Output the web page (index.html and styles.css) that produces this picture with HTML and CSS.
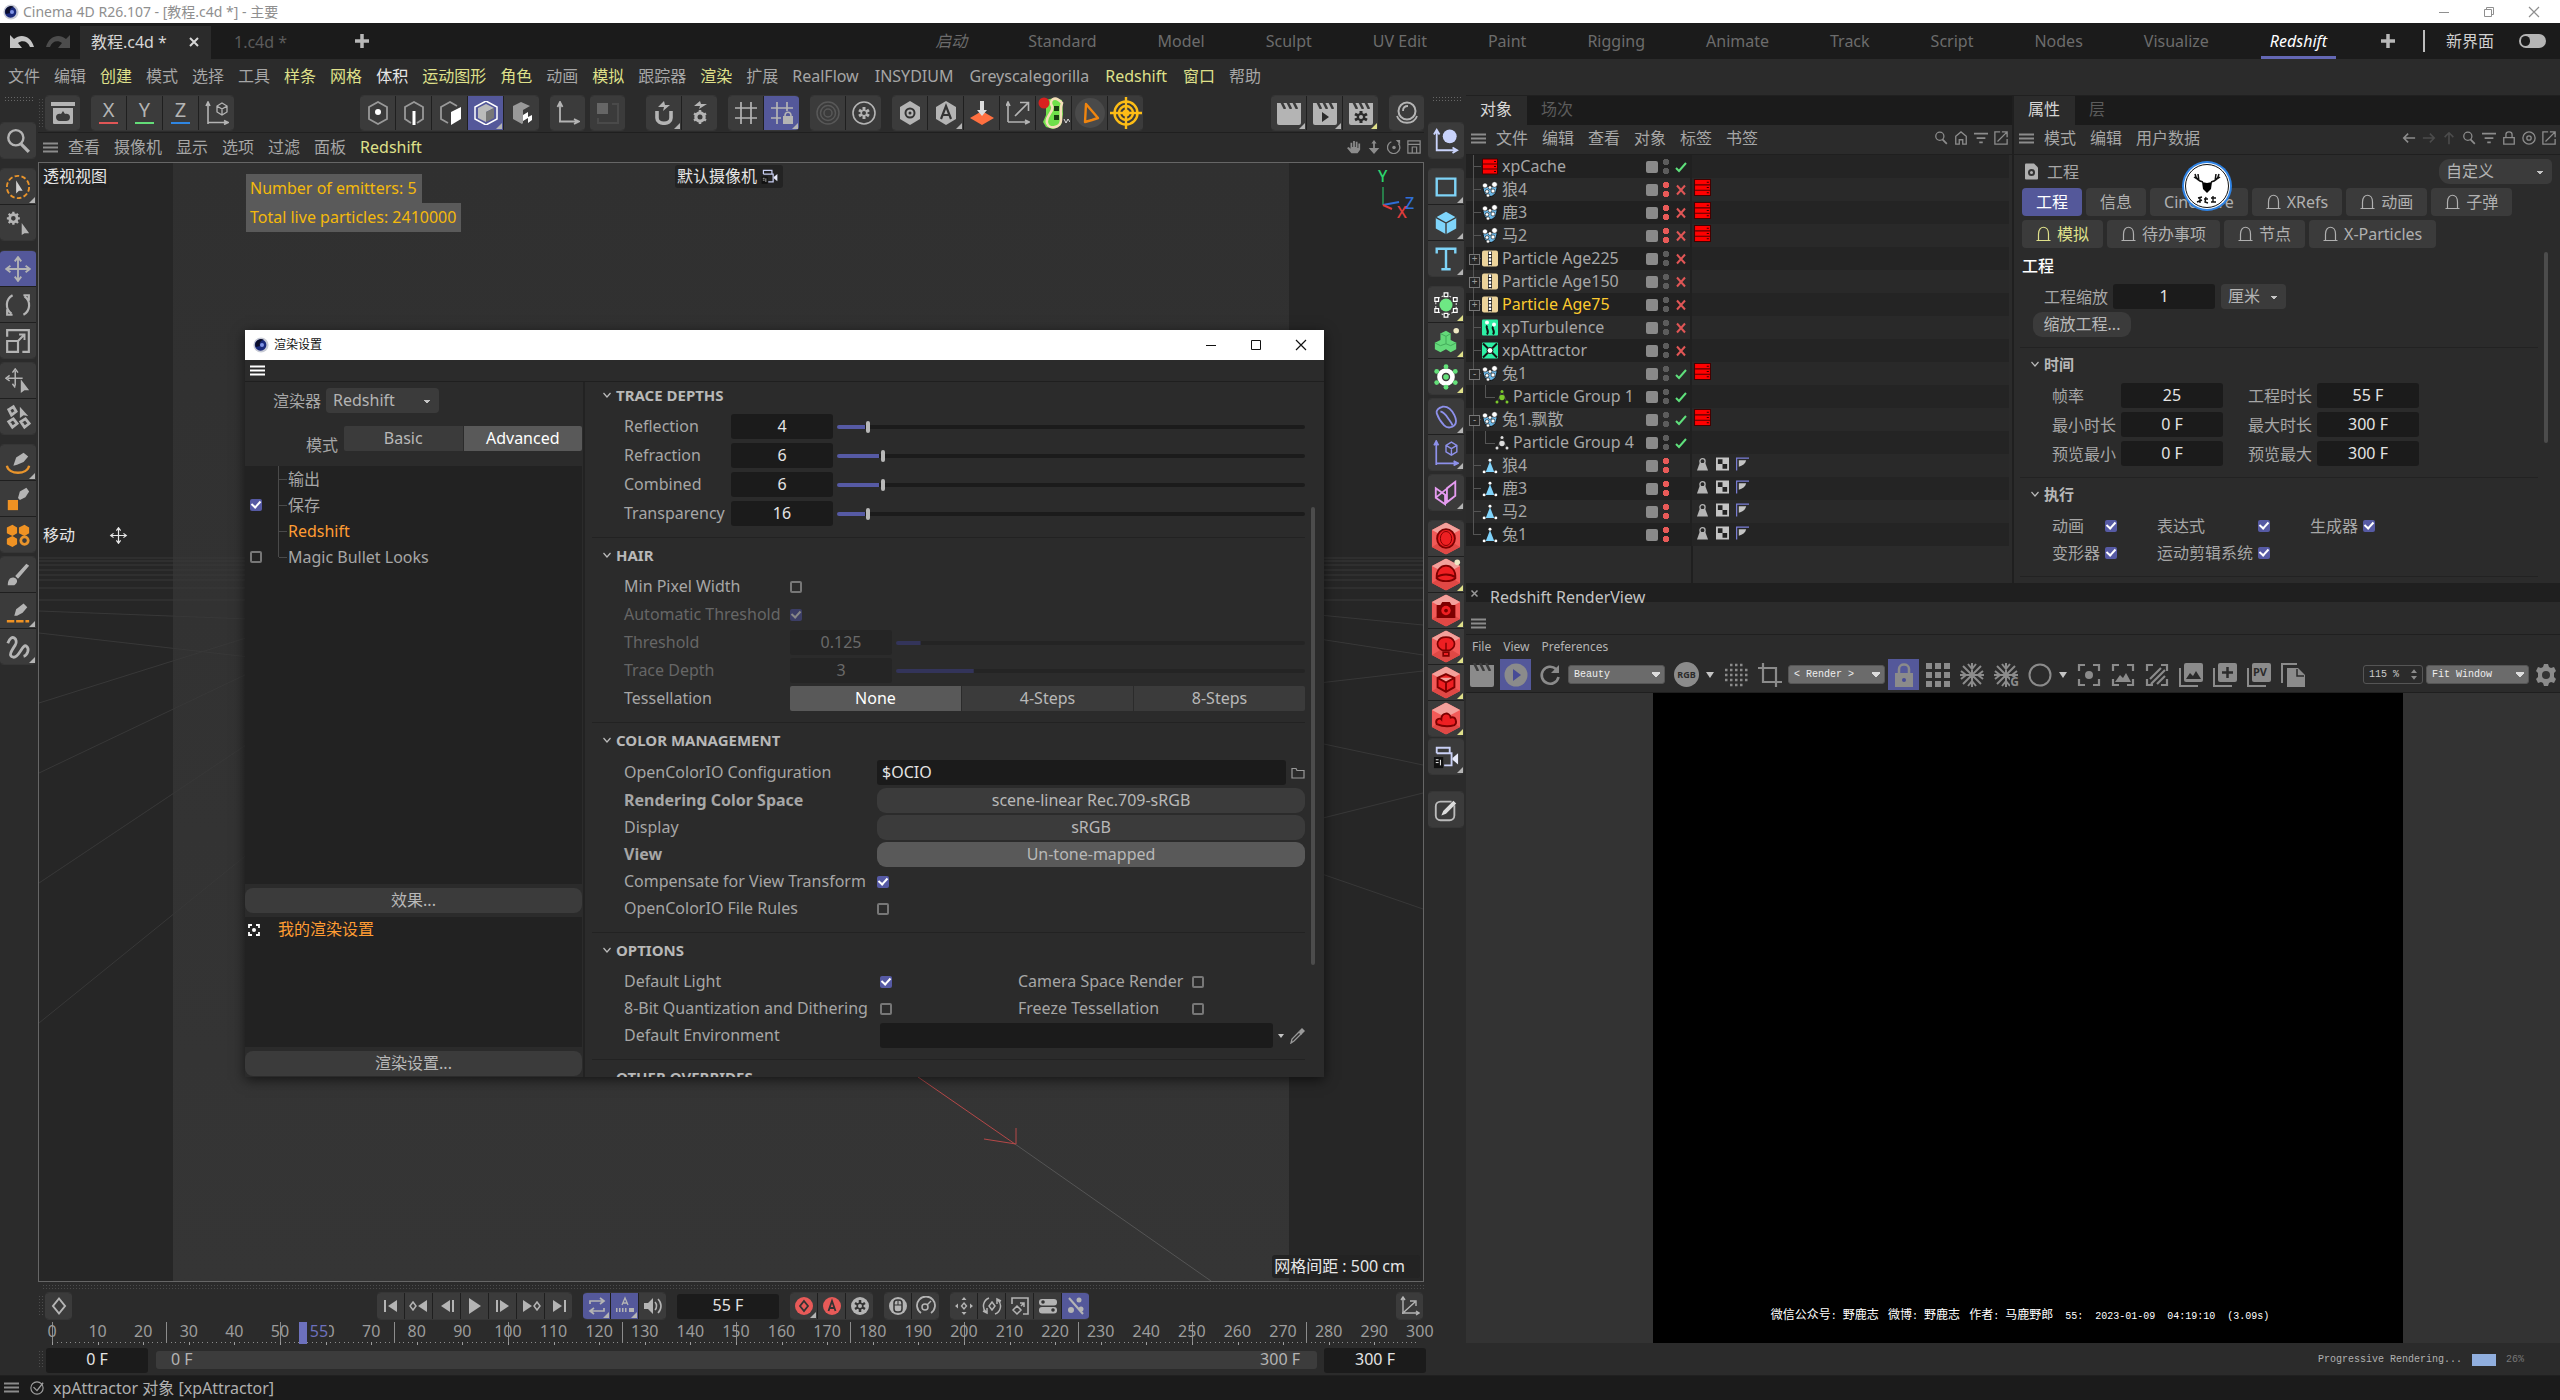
FILE: index.html
```html
<!DOCTYPE html>
<html lang="zh-CN">
<head>
<meta charset="utf-8">
<title>Cinema 4D R26.107 - [教程.c4d *] - 主要</title>
<link rel="stylesheet" href="styles.css">
</head>
<body>
<svg class="sprite" aria-hidden="true">
  <symbol id="logo" viewBox="0 0 16 16"><circle cx="8" cy="8" r="7.6" fill="#c9ccd6"/><circle cx="7.6" cy="8" r="5.8" fill="#1a2a7c"/><path d="M3 10a5.500 5.500 0 0 1 8-7c-3 0-5 3-4 6z" fill="#0a0d2a"/><circle cx="9" cy="8" r="2" fill="#7f94e6"/></symbol>
  <symbol id="menu" viewBox="0 0 15 11"><path d="M0 1.500h15M0 5.500h15M0 9.500h15" stroke="currentColor" stroke-width="2"/></symbol>
  <symbol id="undo" viewBox="0 0 26 14"><path d="M1 14V1l4 4c7-6 17-3 20 8h-4c-2-6-8-7-12-4l4 5z" fill="currentColor"/></symbol>
  <symbol id="redo" viewBox="0 0 26 14"><path d="M25 14V1l-4 4C14-1 4 2 1 13h4c2-6 8-7 12-4l-4 5z" fill="currentColor"/></symbol>
  <symbol id="x" viewBox="0 0 12 12"><path d="M2 2l8 8M10 2l-8 8" stroke="currentColor" stroke-width="2"/></symbol>
  <symbol id="plus" viewBox="0 0 14 14"><path d="M7 0v14M0 7h14" stroke="currentColor" stroke-width="3.500"/></symbol>
  <symbol id="min" viewBox="0 0 12 12"><path d="M1 6.500h10" stroke="currentColor"/></symbol>
  <symbol id="max" viewBox="0 0 12 12"><path d="M1.500 1.500h9v9h-9z" fill="none" stroke="currentColor"/></symbol>
  <symbol id="restore" viewBox="0 0 12 12"><path d="M1.500 3.500h7v7h-7zM3.500 3V1.500h7v7H9" fill="none" stroke="currentColor"/></symbol>
  <symbol id="close" viewBox="0 0 12 12"><path d="M1 1l10 10M11 1L1 11" stroke="currentColor" stroke-width="1.200"/></symbol>
  <symbol id="search" viewBox="0 0 24 24"><circle cx="10" cy="9" r="7" fill="none" stroke="currentColor" stroke-width="2.200"/><path d="M14.500 14.500L22 22" stroke="currentColor" stroke-width="3"/></symbol>
  <symbol id="archive" viewBox="0 0 24 24"><path d="M0 1h24v4H0zM2 7h20v15a1 1 0 0 1-1 1H3a1 1 0 0 1-1-1z" fill="currentColor"/><path d="M12 10l2 3c3-1 5 1 5 3 0 3-2 4-4 4H9c-3 0-4-2-4-4s2-4 5-3z" fill="#3b3b3b"/></symbol>
  <symbol id="coords" viewBox="0 0 24 24"><path d="M3 23V2M1 5l2-4 2 4M3 21.500h19M19 19.500l4 2-4 2" fill="none" stroke="currentColor" stroke-width="1.600"/><path d="M17 2l5 3v6l-5 3-5-3V5zM12 5l5 3 5-3M17 8v6" fill="none" stroke="currentColor" stroke-width="1.300"/></symbol>
  <symbol id="hexpt" viewBox="0 0 24 24"><path d="M12 1l9 5v12l-9 5-9-5V6z" fill="none" stroke="#999" stroke-width="1.800"/><circle cx="12" cy="11" r="3" fill="#fff"/></symbol>
  <symbol id="hexedge" viewBox="0 0 24 24"><path d="M9 22l-6-4V6l9-5 9 5v12l-6 4" fill="none" stroke="#999" stroke-width="1.800"/><path d="M12 10v14" stroke="#fff" stroke-width="3"/></symbol>
  <symbol id="hexpoly" viewBox="0 0 24 24"><path d="M10 22l-7-4V6l9-5 7 4" fill="none" stroke="#999" stroke-width="1.800"/><path d="M13 11l10-5v12l-10 6z" fill="#fff"/></symbol>
  <symbol id="hexobj" viewBox="0 0 24 24"><path d="M12 0l11 6v12l-11 6L1 18V6z" fill="none" stroke="#fff" stroke-width="1.500"/><path d="M12 3l8 4-8 4v10l-8-4V7z" fill="#bbb"/><path d="M12 11l8-4v10l-8 4z" fill="#777"/></symbol>
  <symbol id="hexuv" viewBox="0 0 24 24"><path d="M11 1l9 4-7 4v13l-1 1-9-5V5z" fill="#999"/><path d="M13 14l5-3v5l4-2v5l-4 3v-5l-5 3z" fill="#fff"/></symbol>
  <symbol id="axis" viewBox="0 0 24 24"><path d="M4 21V2M1.500 6L4 1l2.500 5M3 20.500h19M18 18l5 2.500-5 2.500" fill="none" stroke="currentColor" stroke-width="1.800"/></symbol>
  <symbol id="axis2" viewBox="0 0 24 24"><path d="M1 2h11v11H1z" fill="#666"/><path d="M16 3h6v19H2v-5" fill="none" stroke="#4a4a4a" stroke-width="2"/></symbol>
  <symbol id="magnet" viewBox="0 0 24 24"><path d="M5 10v7c0 7 14 7 14 0v-7" fill="none" stroke="currentColor" stroke-width="3.600"/><path d="M12 0l1 4h5l-7 6 1-4H6z" fill="currentColor"/></symbol>
  <symbol id="gear" viewBox="0 0 24 24"><path d="M10 1h4l1 3 2 1 3-1 2 4-2 2v4l2 2-2 4-3-1-2 1-1 3h-4l-1-3-2-1-3 1-2-4 2-2v-4L2 8l2-4 3 1 2-1z" fill="currentColor"/><circle cx="12" cy="12" r="4" fill="#333"/></symbol>
  <symbol id="snapgear" viewBox="0 0 24 24"><path d="M12 0l1 3h6l-8 5 1-3H6z" fill="currentColor"/><circle cx="12" cy="16" r="4" fill="none" stroke="currentColor" stroke-width="3.500"/><path d="M12 9v14M6 12.500l12 7M6 19.500l12-7" stroke="currentColor" stroke-width="2.500"/><circle cx="12" cy="16" r="2.500" fill="#3b3b3b"/></symbol>
  <symbol id="grid" viewBox="0 0 24 24"><path d="M7 1v22M17 1v22M1 7h22M1 17h22" stroke="currentColor" stroke-width="1.700"/></symbol>
  <symbol id="gridlock" viewBox="0 0 24 24"><path d="M7 1v22M17 1v9M1 7h22M1 17h10" stroke="currentColor" stroke-width="1.700"/><path d="M13 15h10v8H13z" fill="currentColor"/><path d="M15 15c0-5 6-5 6 0" fill="none" stroke="currentColor" stroke-width="1.600"/></symbol>
  <symbol id="rings" viewBox="0 0 24 24"><g fill="none" stroke="#585858" stroke-width="1.500"><circle cx="12" cy="12" r="11"/><circle cx="12" cy="12" r="7.500"/><circle cx="12" cy="12" r="4"/></g></symbol>
  <symbol id="ringgear" viewBox="0 0 24 24"><circle cx="12" cy="12" r="11" fill="none" stroke="currentColor" stroke-width="1.600"/><path d="M12 6v12M7 9l10 6M7 15l10-6" stroke="currentColor" stroke-width="3"/><circle cx="12" cy="12" r="2" fill="#3b3b3b"/></symbol>
  <symbol id="hexring" viewBox="0 0 24 24"><path d="M12 0l10 6v12l-10 6L2 18V6z" fill="currentColor"/><circle cx="12" cy="12" r="4.500" fill="none" stroke="#333" stroke-width="2"/><circle cx="12" cy="12" r="1.500" fill="#333"/></symbol>
  <symbol id="hexa" viewBox="0 0 24 24"><path d="M12 0l10 6v12l-10 6L2 18V6z" fill="currentColor"/><path d="M7 18l5-13 5 13M9 14h6" fill="none" stroke="#333" stroke-width="2.200"/></symbol>
  <symbol id="drop" viewBox="0 0 24 24"><path d="M0 17l12-7 12 7-12 7z" fill="#ff7040"/><path d="M10 0h4v9h3l-5 6-5-6h3z" fill="#ddd"/></symbol>
  <symbol id="axisarrow" viewBox="0 0 24 24"><path d="M2 21V2M0 5l2-4 2 4M2 21h20M19 19l4 2-4 2M9 15L22 2M14 1.500h8.500V10" fill="none" stroke="currentColor" stroke-width="1.600"/></symbol>
  <symbol id="snake" viewBox="0 0 32 32"><path d="M8 3l8-2 8 2 1 14-2 11-8 4-7-2-3-5 3-7z" fill="#6fe04a"/><path d="M24 6C16-3 11 4 14 9s-7 10-5 17 14 5 14-3-1-12 1-17z" fill="none" stroke="#f4dfb8" stroke-width="2.600"/><path d="M16 9h5v5h-5zM16 18h5v5h-5z" fill="#173d10"/><circle cx="6" cy="6" r="5.500" fill="#d8201f"/><path d="M26 22l2 4 2-4 2 3" fill="none" stroke="#ddd"/></symbol>
  <symbol id="play3" viewBox="0 0 32 32"><circle cx="16" cy="16" r="15" fill="#4a4a4a"/><path d="M12 7l12 14-6 2-7 2z" fill="none" stroke="#f0850f" stroke-width="2.400" stroke-linejoin="round"/></symbol>
  <symbol id="target" viewBox="0 0 32 32"><g fill="none" stroke="#fdbd16" stroke-width="2.400"><circle cx="16" cy="16" r="11.500"/><circle cx="16" cy="16" r="7"/><path d="M16 0v32M0 16h32"/></g><circle cx="16" cy="16" r="3.500" fill="#fdbd16"/></symbol>
  <symbol id="clap" viewBox="0 0 24 24"><path d="M0 2h24v7H0z" fill="currentColor"/><path d="M4 0l4 8M10 0l4 8M16 0l4 8" stroke="#3b3b3b" stroke-width="2.600"/><path d="M0 8h24v14a2 2 0 0 1-2 2H2a2 2 0 0 1-2-2z" fill="currentColor"/></symbol>
  <symbol id="clapplay" viewBox="0 0 24 24"><use href="#clap"/><path d="M9 11l7 5-7 5z" fill="#2b2b2b"/></symbol>
  <symbol id="clapgear" viewBox="0 0 24 24"><use href="#clap"/><path d="M12 10v12M6 13l12 6M6 19l12-6" stroke="#2b2b2b" stroke-width="3"/><circle cx="12" cy="16" r="4" fill="#2b2b2b"/><circle cx="12" cy="16" r="2" fill="#b4b4b4"/></symbol>
  <symbol id="ball" viewBox="0 0 24 24"><circle cx="12" cy="10" r="8.500" fill="none" stroke="currentColor" stroke-width="2"/><path d="M8 10c0-3 2-5 5-5M2 15c3 9 17 9 20 0" fill="none" stroke="currentColor" stroke-width="1.800"/></symbol>
  <symbol id="hand" viewBox="0 0 16 16"><path d="M5 15L0 9l2-1 2 2V3h2v5h1V1h2v7h1V2h2v7h1V4h2v7l-3 4z" fill="currentColor"/></symbol>
  <symbol id="updown" viewBox="0 0 16 16"><path d="M8 0l3 4H9v5h5l-6 7-6-7h5V4H5z" fill="currentColor"/></symbol>
  <symbol id="orbit" viewBox="0 0 16 16"><path d="M5 2a7 7 0 1 0 8 2" fill="none" stroke="currentColor" stroke-width="1.500"/><path d="M10 0h5v5z" fill="currentColor"/><circle cx="8" cy="8.500" r="2" fill="currentColor"/></symbol>
  <symbol id="panes" viewBox="0 0 16 16"><path d="M1 1h14v14H1zM1 5h14M6 15V8h5v7" fill="none" stroke="currentColor" stroke-width="1.400"/></symbol>
  <symbol id="home" viewBox="0 0 16 16"><path d="M2 6l6-5 6 5v9h-4v-5H6v5H2z" fill="none" stroke="currentColor" stroke-width="1.500"/></symbol>
  <symbol id="filter" viewBox="0 0 16 16"><path d="M0 3h16M3 8h10M6 13h4" stroke="currentColor" stroke-width="2"/></symbol>
  <symbol id="ext" viewBox="0 0 16 16"><path d="M7 1H1v14h14V9M4 12L15 1M9 1h6v6" fill="none" stroke="currentColor" stroke-width="1.500"/></symbol>
  <symbol id="left" viewBox="0 0 16 16"><path d="M15 8H2M7 3L2 8l5 5" fill="none" stroke="currentColor" stroke-width="1.800"/></symbol>
  <symbol id="right" viewBox="0 0 16 16"><path d="M1 8h13M9 3l5 5-5 5" fill="none" stroke="currentColor" stroke-width="1.800"/></symbol>
  <symbol id="up" viewBox="0 0 16 16"><path d="M8 15V2M3 7l5-5 5 5" fill="none" stroke="currentColor" stroke-width="1.800"/></symbol>
  <symbol id="lock" viewBox="0 0 16 16"><path d="M2 7.500h12V15H2zM4.500 7V4c0-4 7-4 7 0v3" fill="none" stroke="currentColor" stroke-width="1.500"/></symbol>
  <symbol id="aim" viewBox="0 0 16 16"><circle cx="8" cy="8" r="7" fill="none" stroke="currentColor" stroke-width="1.500"/><circle cx="8" cy="8" r="2.500" fill="none" stroke="currentColor" stroke-width="1.500"/></symbol>
  <symbol id="docgear" viewBox="0 0 13 16"><path d="M1 0h8l4 4v11a1 1 0 0 1-1 1H1a1 1 0 0 1-1-1V1a1 1 0 0 1 1-1z" fill="#b0b0b0"/><circle cx="6.500" cy="9" r="2.500" fill="none" stroke="#333" stroke-width="2"/></symbol>
  <symbol id="bell" viewBox="0 0 15 16"><path d="M.5 14.500h14M2.500 14V8c0-9 10-9 10 0v6" fill="none" stroke="currentColor" stroke-width="1.200"/></symbol>
  <symbol id="chev" viewBox="0 0 8 8"><path d="M.5 2L4 6l3.500-4" fill="none" stroke="#bbb" stroke-width="1.200"/></symbol>
  <symbol id="check" viewBox="0 0 12 12"><path d="M1 7l3 3 7-8" fill="none" stroke="#5fe07c" stroke-width="2"/></symbol>
  <symbol id="cross" viewBox="0 0 12 12"><path d="M2 1.500l8 9M10 1.500l-8 9" stroke="#e05656" stroke-width="2"/></symbol>
  <symbol id="cache" viewBox="0 0 16 16"><path d="M.5.500h15v15H.5z" fill="#f00" stroke="#400"/><path d="M1 5.500h14M1 10.500h14" stroke="#500"/><path d="M12 3h2M12 8h2M12 13h2" stroke="#300"/></symbol>
  <symbol id="emit" viewBox="0 0 16 16"><path d="M1 5c0 6 3 10 7 10s7-4 7-10z" fill="#6cb8e8" stroke="#111"/><g fill="#fff" stroke="#111" stroke-width=".6"><circle cx="3" cy="4" r="2.500"/><circle cx="12.500" cy="3" r="2.800"/><circle cx="8" cy="6" r="1.800"/><circle cx="5" cy="10" r="1.800"/><circle cx="11" cy="9.500" r="2"/><circle cx="6" cy="14" r="1.700"/></g></symbol>
  <symbol id="age" viewBox="0 0 16 16"><rect width="16" height="16" rx="2" fill="#ecd39a"/><path d="M6 1h4v14H6z" fill="#222"/><path d="M8 1v14" stroke="#fff" stroke-width="2.400" stroke-dasharray="2.400 1"/></symbol>
  <symbol id="turb" viewBox="0 0 16 16"><rect width="16" height="16" rx="1" fill="#2df0a5"/><path d="M5 15c3-4-2-6 0-9M11 15c3-4-2-5 0-8" fill="none" stroke="#111" stroke-width="2"/><circle cx="5" cy="3" r="2" fill="#fff"/><circle cx="12" cy="5" r="2" fill="#fff"/></symbol>
  <symbol id="attr" viewBox="0 0 16 16"><rect width="16" height="16" rx="1" fill="#2df0a5"/><path d="M1 1l14 14M15 1L1 15" stroke="#111" stroke-width="2"/><circle cx="8" cy="8" r="3" fill="#fff" stroke="#111"/></symbol>
  <symbol id="group" viewBox="0 0 14 16"><path d="M7 2L2 14M7 2l5 12" stroke="#555" stroke-width=".6"/><g fill="currentColor"><circle cx="7" cy="3" r="1.500"/><circle cx="7" cy="9" r="2.700"/><circle cx="2" cy="13.500" r="1.500"/><circle cx="12" cy="13.500" r="1.500"/></g></symbol>
  <symbol id="poly" viewBox="0 0 14 16"><path d="M7 4l4 10H3z" fill="#7fd3fb"/><g fill="#fff"><circle cx="7" cy="3" r="1.400"/><circle cx="1.500" cy="14" r="1.400"/><circle cx="12.500" cy="14" r="1.400"/></g></symbol>
  <symbol id="weight" viewBox="0 0 14 14"><path d="M4 6h6l3 8H1z" fill="#b4b4b4"/><circle cx="7" cy="4" r="2.800" fill="none" stroke="#b4b4b4" stroke-width="1.400"/></symbol>
  <symbol id="uvw" viewBox="0 0 14 14"><path d="M0 0h14v14H0z" fill="#c4c4c4"/><path d="M2 2h5v5H2zM7 7h5v5H7z" fill="#222"/></symbol>
  <symbol id="phong" viewBox="0 0 14 14"><path d="M.7 14V.7H14" fill="none" stroke="#7b7fd8" stroke-width="1.300"/><path d="M3 3h8c-1 4-4 6-8 7z" fill="#c4c4c4"/></symbol>
  <symbol id="live" viewBox="0 0 28 28"><circle cx="14" cy="14" r="12" fill="none" stroke="#e8942c" stroke-width="2" stroke-dasharray="5 2.500"/><path d="M12 7l7 11h-4l-3 3z" fill="#d0d0d0"/></symbol>
  <symbol id="gearcur" viewBox="0 0 28 28"><circle cx="9" cy="9" r="4" fill="none" stroke="currentColor" stroke-width="3"/><path d="M9 2v3M9 13v3M2 9h3M13 9h3M4 4l2 2M12 12l2 2M4 14l2-2M12 6l2-2" stroke="currentColor" stroke-width="2.500"/><path d="M18 14l8 11h-5l-3 2z" fill="currentColor"/></symbol>
  <symbol id="move" viewBox="0 0 24 24"><path d="M12 2v20M2 12h20M9 5l3-4 3 4M9 19l3 4 3-4M5 9l-4 3 4 3M19 9l4 3-4 3" fill="none" stroke="currentColor" stroke-width="1.700"/></symbol>
  <symbol id="rotate" viewBox="0 0 24 24"><path d="M7 3a10 10 0 0 0-1 17M17 21a10 10 0 0 0 1-17M7 21H2v-5M17 3h5v5" fill="none" stroke="currentColor" stroke-width="2"/></symbol>
  <symbol id="scale" viewBox="0 0 24 24"><path d="M2 8V2h20v20h-6" fill="none" stroke="currentColor" stroke-width="2"/><path d="M2 12h10v10H2z" fill="none" stroke="currentColor" stroke-width="2"/><path d="M12 12l6-6M13 6h5v5" fill="none" stroke="currentColor" stroke-width="1.800"/></symbol>
  <symbol id="movecur" viewBox="0 0 28 28"><path d="M11 3v16M3 11h16M8 5l3-4 3 4M8 17l3 4M5 8l-4 3 4 3" fill="none" stroke="currentColor" stroke-width="1.600"/><path d="M17 12l9 12h-5l-4 3z" fill="currentColor"/></symbol>
  <symbol id="pieces" viewBox="0 0 28 28"><g fill="none" stroke="currentColor" stroke-width="3"><path d="M4 6l5-3 3 5-5 4zM4 19l5-3 4 5-5 4zM17 19l5-3 4 5-5 4z"/></g><path d="M16 3l9 10-5-1-4 3z" fill="currentColor"/></symbol>
  <symbol id="pen" viewBox="0 0 28 28"><path d="M2 17c2 10 22 10 24 0" fill="none" stroke="#e8942c" stroke-width="2.500"/><path d="M9 17l3-9 8-5 5 4-5 6-7 3z" fill="#b4b4b4"/></symbol>
  <symbol id="pen2" viewBox="0 0 28 28"><path d="M3 15h11v11H3z" fill="#ef9223"/><path d="M14 13l2-7 7-4 3 4-4 6-6 3z" fill="#b4b4b4"/></symbol>
  <symbol id="pen3" viewBox="0 0 28 28"><path d="M2 25h24" stroke="#ef9223" stroke-width="2.500" stroke-dasharray="8 2"/><path d="M10 19l2-7 8-6 4 4-5 6-6 3z" fill="#b4b4b4"/></symbol>
  <symbol id="blocks" viewBox="0 0 28 28"><g fill="#ef9223"><path d="M2 6l6-3 5 3v6l-5 3-6-3zM15 6l6-3 5 3v6l-5 3-6-3zM2 18l6-3 5 3v6l-5 3-6-3z"/></g><circle cx="21" cy="20" r="4" fill="none" stroke="#e8942c" stroke-width="3"/></symbol>
  <symbol id="brush" viewBox="0 0 28 28"><path d="M3 25c0-6 3-9 7-8s4 6 0 8zM11 15L23 2l3 2-12 14z" fill="currentColor"/></symbol>
  <symbol id="squig" viewBox="0 0 28 28"><path d="M3 10c4-12 12-4 8 2s-8 12-2 13 10-15 14-12 1 10-3 11" fill="none" stroke="currentColor" stroke-width="3"/></symbol>
  <symbol id="nullo" viewBox="0 0 28 28"><path d="M4 25V4M1 7l3-5 3 5M3 24h21M21 21l5 3-5 3" fill="none" stroke="#c9d3fb" stroke-width="2"/><circle cx="18" cy="9" r="7.500" fill="#c9d3fb"/></symbol>
  <symbol id="rect" viewBox="0 0 28 28"><path d="M4 5h20v18H4z" fill="none" stroke="#7ed3f7" stroke-width="2.600"/></symbol>
  <symbol id="cube" viewBox="0 0 28 28"><path d="M14 2l11 6v12l-11 6-11-6V8z" fill="#7fd5fb"/><path d="M3 8l11 6 11-6M14 14v12" fill="none" stroke="#3b3b3b" stroke-width="1.500"/></symbol>
  <symbol id="text" viewBox="0 0 28 28"><path d="M4 8V3h20v5M14 3v22M9 25h10" fill="none" stroke="#7ed3f7" stroke-width="2.600"/></symbol>
  <symbol id="subdiv" viewBox="0 0 28 28"><circle cx="14" cy="14" r="7" fill="#6ee884"/><path d="M14 3l11 5v12l-11 6-11-6V8z" fill="none" stroke="#ddd" stroke-width="1.200" stroke-dasharray="2 2"/><g fill="#333" stroke="#fff" stroke-width="1.300"><path d="M12 1h4v4h-4zM2 6h4v4H2zM22 6h4v4h-4zM2 18h4v4H2zM22 18h4v4h-4zM12 23h4v4h-4z"/></g></symbol>
  <symbol id="cloner" viewBox="0 0 28 28"><path d="M8 6l6-3 5 3v7l6 3v7l-6 3-5-3-6 3-6-3v-7l6-3z" fill="#64d97a"/><path d="M8 6l6 3 5-3M14 9v8M2 16l6 3 6-2 5 2 6-3" fill="none" stroke="#40a857"/><circle cx="25" cy="3" r="3" fill="#efe9c4"/></symbol>
  <symbol id="field" viewBox="0 0 28 28"><circle cx="14" cy="14" r="7" fill="none" stroke="#fff" stroke-width="5"/><g fill="#64e07a"><circle cx="14" cy="14" r="3"/><circle cx="14" cy="3" r="2.600"/><circle cx="14" cy="25" r="2.600"/><circle cx="4" cy="8" r="2.600"/><circle cx="24" cy="8" r="2.600"/><circle cx="4" cy="20" r="2.600"/><circle cx="24" cy="20" r="2.600"/></g></symbol>
  <symbol id="bean" viewBox="0 0 28 28"><path d="M10 3c6-1 10 3 13 9s2 9 0 11-7 4-11 0S5 13 4 10s2-6 6-7zM8 8c4 1 6 4 8 7s4 5 5 8" fill="none" stroke="#8d90ea" stroke-width="2"/></symbol>
  <symbol id="pcoords" viewBox="0 0 24 24"><g color="#8d90ea"><use href="#coords"/></g></symbol>
  <symbol id="sym" viewBox="0 0 28 28"><path d="M3 9l10 7v10L3 19zM15 9l9-7v15l-9 7zM3 19l21-17" fill="none" stroke="#e59bf0" stroke-width="2"/></symbol>
  <symbol id="rshex" viewBox="0 0 32 34"><path d="M16 0l15 8v18l-15 8L1 26V8z" fill="#f25a58"/><path d="M16 0l15 8-15 8L1 8z" fill="#f3a09b"/><path d="M1 26l15-9 15 9-15 8z" fill="#e04845"/></symbol>
  <symbol id="rs1" viewBox="0 0 32 34"><use href="#rshex"/><ellipse cx="16" cy="17" rx="9.500" ry="10" fill="#ee1f22" stroke="#7d0000" stroke-width="2"/><ellipse cx="16" cy="17" rx="6" ry="7.500" fill="none" stroke="#7d0000" stroke-width="1"/></symbol>
  <symbol id="rs2" viewBox="0 0 32 34"><use href="#rshex"/><path d="M6 21c-1-18 21-18 20 0-4 4-16 4-20 0zM6 20c5-4 15-4 20 0" fill="#ee1f22" stroke="#7d0000" stroke-width="2"/><circle cx="28" cy="4" r="3" fill="#efe9c4"/></symbol>
  <symbol id="rs3" viewBox="0 0 32 34"><use href="#rshex"/><path d="M6 11h4l2-3h8l2 3h4v14H6z" fill="#7d0000"/><circle cx="16" cy="17" r="5" fill="#ee1f22"/><circle cx="16" cy="17" r="2" fill="#7d0000"/></symbol>
  <symbol id="rs4" viewBox="0 0 32 34"><use href="#rshex"/><path d="M12 21c-9-5-5-14 4-14s13 9 4 14zM13 23h6v4h-6z" fill="#ee1f22" stroke="#7d0000" stroke-width="1.800"/><path d="M16 21v-8" stroke="#7d0000" stroke-width="1.500"/></symbol>
  <symbol id="rs5" viewBox="0 0 32 34"><use href="#rshex"/><path d="M16 8l9 4v10l-9 5-9-5V12zM7 12l9 5 9-5M16 17v10" fill="#ee1f22" stroke="#7d0000" stroke-width="2"/></symbol>
  <symbol id="rs6" viewBox="0 0 32 34"><use href="#rshex"/><path d="M6 23c-2-5 3-7 5-5 0-8 9-8 10-2 6-2 7 6 4 8-6 2-14 1-19-1z" fill="#ee1f22" stroke="#7d0000" stroke-width="2"/></symbol>
  <symbol id="stcam" viewBox="0 0 28 28"><path d="M4 10V4h14v6M4 10h16v13h-8" fill="none" stroke="#c9d0f5" stroke-width="2"/><path d="M21 15l6-5v12l-6-5z" fill="#e6e9fa"/><path d="M1 14h10v12H1z" fill="#111"/><path d="M3 17h3M3 20h3M8 17v6" stroke="#fff"/></symbol>
  <symbol id="edit" viewBox="0 0 28 28"><path d="M20 5H8a5 5 0 0 0-5 5v10a5 5 0 0 0 5 5h10a5 5 0 0 0 5-5V9" fill="none" stroke="#bbb" stroke-width="2"/><path d="M9 20l2-5L22 4l3 3-11 11z" fill="#ddd"/></symbol>
  <symbol id="kdiam" viewBox="0 0 20 20"><path d="M10 2.500l6 7.500-6 7.500L4 10z" fill="none" stroke="currentColor" stroke-width="2"/></symbol>
  <symbol id="t1" viewBox="0 0 20 20"><path d="M4 4v12" stroke="currentColor" stroke-width="2"/><path d="M16 4v12l-9-6z" fill="currentColor"/></symbol>
  <symbol id="t2" viewBox="0 0 20 20"><path d="M4 6l3 4-3 4-3-4z" fill="none" stroke="currentColor" stroke-width="1.500"/><path d="M18 4v12l-9-6z" fill="currentColor"/></symbol>
  <symbol id="t3" viewBox="0 0 20 20"><path d="M16 4v12" stroke="currentColor" stroke-width="2"/><path d="M13 4v12l-9-6z" fill="currentColor"/></symbol>
  <symbol id="t4" viewBox="0 0 20 20"><path d="M4 2v16l12-8z" fill="currentColor"/></symbol>
  <symbol id="t5" viewBox="0 0 20 20"><path d="M4 4v12" stroke="currentColor" stroke-width="2"/><path d="M7 4v12l9-6z" fill="currentColor"/></symbol>
  <symbol id="t6" viewBox="0 0 20 20"><path d="M16 6l3 4-3 4-3-4z" fill="none" stroke="currentColor" stroke-width="1.500"/><path d="M2 4v12l9-6z" fill="currentColor"/></symbol>
  <symbol id="t7" viewBox="0 0 20 20"><path d="M16 4v12" stroke="currentColor" stroke-width="2"/><path d="M4 4v12l9-6z" fill="currentColor"/></symbol>
  <symbol id="loop" viewBox="0 0 20 20"><path d="M3 8V5h13M13 2l4 3-4 3M17 12v3H4M7 12l-4 3 4 3" fill="none" stroke="currentColor" stroke-width="1.700"/></symbol>
  <symbol id="abar" viewBox="0 0 20 20"><path d="M7 9l3-7 3 7M8 7h4" fill="none" stroke="currentColor" stroke-width="1.300"/><path d="M1 14h11" stroke="currentColor" stroke-width="4" stroke-dasharray="1.500 1.500"/><path d="M14 12h5v4h-5z" fill="currentColor"/></symbol>
  <symbol id="sound" viewBox="0 0 20 20"><path d="M1 7h4l5-5v16l-5-5H1z" fill="currentColor"/><path d="M12 6c2 2 2 6 0 8M15 3c4 4 4 10 0 14" fill="none" stroke="currentColor" stroke-width="1.600"/></symbol>
  <symbol id="rec" viewBox="0 0 20 20"><circle cx="10" cy="10" r="9" fill="#e85a58"/><path d="M10 5l4 5-4 5-4-5z" fill="none" stroke="#333" stroke-width="1.800"/></symbol>
  <symbol id="auto" viewBox="0 0 20 20"><circle cx="10" cy="10" r="9" fill="#e85a58"/><path d="M6.500 15L10 5l3.500 10M8 12h4" fill="none" stroke="#333" stroke-width="1.800"/></symbol>
  <symbol id="kgear" viewBox="0 0 20 20"><circle cx="10" cy="10" r="9" fill="#b4b4b4"/><path d="M10 4v12M5 7l10 6M5 13l10-6" stroke="#333" stroke-width="2.500"/><circle cx="10" cy="10" r="3.500" fill="#333"/><circle cx="10" cy="10" r="2" fill="#b4b4b4"/></symbol>
  <symbol id="mouse" viewBox="0 0 20 20"><circle cx="10" cy="10" r="9" fill="#b4b4b4"/><rect x="6" y="4" width="8" height="12" rx="3" fill="none" stroke="#333" stroke-width="1.500"/><path d="M10 4v5M6 9h8" stroke="#333"/></symbol>
  <symbol id="dial" viewBox="0 0 20 20"><path d="M5 17a9 9 0 1 1 10 0" fill="none" stroke="currentColor" stroke-width="1.800"/><circle cx="9" cy="11" r="3" fill="none" stroke="currentColor" stroke-width="1.500"/><path d="M11 9l4-4" stroke="currentColor" stroke-width="1.500"/></symbol>
  <symbol id="kmove" viewBox="0 0 20 20"><path d="M10 7l2.500 3-2.500 3-2.500-3z" fill="none" stroke="currentColor" stroke-width="1.400"/><path d="M10 1l2.500 3h-5zM10 19l2.500-3h-5zM1 10l3-2.500v5zM19 10l-3-2.500v5z" fill="currentColor"/></symbol>
  <symbol id="krot" viewBox="0 0 20 20"><path d="M10 6l3 4-3 4-3-4z" fill="none" stroke="currentColor" stroke-width="1.500"/><path d="M7 2a8.500 8.500 0 0 0-3 14M13 18a8.500 8.500 0 0 0 3-14M1 15l4 2v-5M19 5l-4-2v5" fill="none" stroke="currentColor" stroke-width="1.500"/></symbol>
  <symbol id="kscale" viewBox="0 0 20 20"><path d="M2 8V2h16v16h-5" fill="none" stroke="currentColor" stroke-width="1.600"/><path d="M7 10l4 4-4 4-4-4zM11 10l3-3M10 7h4v4" fill="none" stroke="currentColor" stroke-width="1.500"/></symbol>
  <symbol id="kparam" viewBox="0 0 20 20"><rect x="1" y="3" width="18" height="6.500" rx="3" fill="#b4b4b4"/><rect x="1" y="11" width="18" height="6.500" rx="3" fill="#b4b4b4"/><circle cx="5" cy="6" r="1.800" fill="#333"/><circle cx="15" cy="14" r="1.800" fill="#333"/></symbol>
  <symbol id="kpla" viewBox="0 0 20 20"><path d="M3 2l14 16" stroke="currentColor" stroke-width="2"/><g fill="currentColor"><circle cx="13" cy="4" r="2.500"/><circle cx="5" cy="14" r="3"/><circle cx="15" cy="13" r="2.500"/></g></symbol>
  <symbol id="fcurve" viewBox="0 0 20 20"><path d="M3 18V2M1 4l2-3 2 3M2 17h16M16 15l3 2-3 2M4 16L15 6M10 5h6v5" fill="none" stroke="currentColor" stroke-width="1.400"/></symbol>
  <symbol id="okc" viewBox="0 0 16 16"><circle cx="8" cy="8" r="7" fill="none" stroke="currentColor" stroke-width="1.300"/><path d="M4 7l4 4 7-9" fill="none" stroke="currentColor" stroke-width="1.500"/></symbol>
  <symbol id="playc" viewBox="0 0 24 24"><circle cx="12" cy="12" r="11.500" fill="#8b8b8b"/><path d="M9 6l8 6-8 6z" fill="#474b96"/></symbol>
  <symbol id="refresh" viewBox="0 0 24 24"><path d="M18 6a8.500 8.500 0 1 0 2.500 8" fill="none" stroke="currentColor" stroke-width="2.600"/><path d="M21 2v8h-8z" fill="currentColor"/></symbol>
  <symbol id="dots" viewBox="0 0 24 24"><path d="M6 2h14M1 7h23M1 12h23M1 17h23M6 22h14" stroke="currentColor" stroke-width="2.400" stroke-dasharray="2.500 2.500"/></symbol>
  <symbol id="crop" viewBox="0 0 24 24"><path d="M5 0v19h19M0 5h18v19" fill="none" stroke="currentColor" stroke-width="2.200"/></symbol>
  <symbol id="lock2" viewBox="0 0 24 24"><path d="M3 10h18v14H3z" fill="currentColor"/><path d="M7 11V6c0-6 10-6 10 0v5" fill="none" stroke="currentColor" stroke-width="2.500"/><circle cx="12" cy="17" r="2" fill="#474b96"/></symbol>
  <symbol id="nine" viewBox="0 0 24 24"><path d="M0 0h6v6H0zM9 0h6v6H9zM18 0h6v6h-6zM0 9h6v6H0zM9 9h6v6H9zM18 9h6v6h-6zM0 18h6v6H0zM9 18h6v6H9zM18 18h6v6h-6z" fill="currentColor"/></symbol>
  <symbol id="snow" viewBox="0 0 24 24"><path d="M12 0v24M0 12h24M3 3l18 18M21 3L3 21M8 1l4 5 4-5M8 23l4-5 4 5M1 8l5 4-5 4M23 8l-5 4 5 4" fill="none" stroke="currentColor" stroke-width="2"/></symbol>
  <symbol id="ring" viewBox="0 0 24 24"><circle cx="12" cy="12" r="10.500" fill="none" stroke="currentColor" stroke-width="2"/></symbol>
  <symbol id="corners" viewBox="0 0 24 24"><path d="M2 8V2h6M16 2h6v6M2 16v6h6M22 16v6h-6" fill="none" stroke="currentColor" stroke-width="2.200"/></symbol>
  <symbol id="cdot" viewBox="0 0 24 24"><use href="#corners"/><circle cx="12" cy="12" r="4" fill="currentColor"/></symbol>
  <symbol id="cimg" viewBox="0 0 24 24"><use href="#corners"/><path d="M4 19l5-7 3 3 3-5 5 9z" fill="currentColor"/></symbol>
  <symbol id="chat" viewBox="0 0 24 24"><use href="#corners"/><path d="M5 16L16 5M6 21L20 7M12 21l8-8" stroke="currentColor" stroke-width="2.200"/></symbol>
  <symbol id="stack" viewBox="0 0 24 24"><path d="M1 5v18h18" fill="none" stroke="currentColor" stroke-width="2"/><rect x="5" width="19" height="19" rx="2" fill="currentColor"/></symbol>
  <symbol id="simg" viewBox="0 0 24 24"><use href="#stack"/><path d="M7 16l4-6 3 3 3-5 5 8z" fill="#2b2b2b"/></symbol>
  <symbol id="splus" viewBox="0 0 24 24"><use href="#stack"/><path d="M14.500 4v11M9 9.500h11" stroke="#2b2b2b" stroke-width="2.500"/></symbol>
  <symbol id="spage" viewBox="0 0 24 24"><path d="M1 20V1h15" fill="none" stroke="currentColor" stroke-width="2"/><path d="M6 5h11l7 7v12H6z" fill="currentColor"/><path d="M16 6v7h7" fill="none" stroke="#2b2b2b" stroke-width="1.500"/></symbol>
  <symbol id="spin" viewBox="0 0 8 14"><path d="M0 5l4-5 4 5zM0 9l4 5 4-5z" fill="#8b8b8b"/></symbol>
  <symbol id="folder" viewBox="0 0 14 12"><path d="M1 11V1.500h4l1 2h7V11z" fill="none" stroke="currentColor" stroke-width="1.200"/></symbol>
  <symbol id="dropper" viewBox="0 0 16 16"><path d="M2 15l1-4 7-7 2 2-7 7z" fill="none" stroke="currentColor" stroke-width="1.300"/><path d="M10 3l3-3 3 3-4 4z" fill="currentColor"/></symbol>
  <symbol id="scene" viewBox="0 0 12 12"><path d="M1 4V1h3M8 1h3v3M1 8v3h3M11 8v3H8" fill="none" stroke="currentColor" stroke-width="1.800"/><circle cx="6" cy="6" r="2" fill="currentColor"/></symbol>
</svg>

<header class="titlebar">
  <svg class="i16"><use href="#logo"/></svg><span>Cinema 4D R26.107 - [教程.c4d *] - 主要</span>
  <div class="winbtns"><button aria-label="最小化"><svg class="i12"><use href="#min"/></svg></button><button aria-label="还原"><svg class="i12"><use href="#restore"/></svg></button><button aria-label="关闭"><svg class="i12"><use href="#close"/></svg></button></div>
</header>

<div class="docbar">
  <button class="undo" aria-label="撤销"><svg><use href="#undo"/></svg></button>
  <button class="undo off" aria-label="重做"><svg><use href="#redo"/></svg></button>
  <div class="doctab on"><span>教程.c4d *</span><button aria-label="关闭标签"><svg class="i12"><use href="#x"/></svg></button></div>
  <div class="doctab"><span>1.c4d *</span></div>
  <button class="adddoc" aria-label="新建"><svg class="i14"><use href="#plus"/></svg></button>
  <nav class="layouts">
    <a href="#"><i>启动</i></a><a href="#">Standard</a><a href="#">Model</a><a href="#">Sculpt</a><a href="#">UV Edit</a><a href="#">Paint</a><a href="#">Rigging</a><a href="#">Animate</a><a href="#">Track</a><a href="#">Script</a><a href="#">Nodes</a><a href="#">Visualize</a><a href="#" class="on"><i>Redshift</i></a>
  </nav>
  <button class="addlayout" aria-label="添加布局"><svg class="i14"><use href="#plus"/></svg></button>
  <label class="newui">新界面<input type="checkbox" class="toggle"></label>
</div>

<nav class="mainmenu">
  <a href="#">文件</a><a href="#">编辑</a><a href="#" class="y">创建</a><a href="#">模式</a><a href="#">选择</a><a href="#">工具</a><a href="#" class="y">样条</a><a href="#" class="y">网格</a><a href="#" class="w">体积</a><a href="#" class="y">运动图形</a><a href="#" class="y">角色</a><a href="#">动画</a><a href="#" class="y">模拟</a><a href="#">跟踪器</a><a href="#" class="y">渲染</a><a href="#">扩展</a><a href="#" class="lat">RealFlow</a><a href="#" class="lat">INSYDIUM</a><a href="#" class="lat">Greyscalegorilla</a><a href="#" class="lat y">Redshift</a><a href="#" class="y">窗口</a><a href="#">帮助</a>
</nav>

<main class="work">
  <aside class="tools">
    <div class="grip"></div>
    <div class="bg v s1"><button aria-label="搜索"><svg><use href="#search"/></svg></button></div>
    <div class="bg v s2"><button class="more" aria-label="实时选择"><svg><use href="#live"/></svg></button><button aria-label="选择设置"><svg><use href="#gearcur"/></svg></button></div>
    <div class="bg v s2"><button class="on" aria-label="移动"><svg><use href="#move"/></svg></button><button aria-label="旋转"><svg><use href="#rotate"/></svg></button><button aria-label="缩放"><svg><use href="#scale"/></svg></button></div>
    <div class="bg v s3"><button aria-label="放置"><svg><use href="#movecur"/></svg></button><button aria-label="散布"><svg><use href="#pieces"/></svg></button></div>
    <div class="bg v s2"><button class="more" aria-label="样条画笔"><svg><use href="#pen"/></svg></button><button aria-label="多边形画笔"><svg><use href="#pen2"/></svg></button><button aria-label="体素"><svg><use href="#blocks"/></svg></button></div>
    <div class="bg v s3"><button aria-label="笔刷"><svg><use href="#brush"/></svg></button><button class="more" aria-label="线条"><svg><use href="#pen3"/></svg></button><button class="more" aria-label="涂抹"><svg><use href="#squig"/></svg></button></div>
  </aside>

  <section class="center">
    <div class="toolbar">
      <div class="vgrip"></div>
      <div class="bg"><button aria-label="资产"><svg><use href="#archive"/></svg></button></div>
      <div class="bg g11"><button class="ax axx">X</button><button class="ax axy">Y</button><button class="ax axz">Z</button><button aria-label="坐标"><svg><use href="#coords"/></svg></button></div>
      <div class="bg gbig"><button aria-label="点"><svg><use href="#hexpt"/></svg></button><button aria-label="边"><svg><use href="#hexedge"/></svg></button><button aria-label="多边形"><svg><use href="#hexpoly"/></svg></button><button class="on more" aria-label="模型"><svg><use href="#hexobj"/></svg></button><button aria-label="纹理"><svg><use href="#hexuv"/></svg></button></div>
      <div class="bg g11"><button aria-label="轴"><svg><use href="#axis"/></svg></button></div>
      <div class="bg g5"><button aria-label="视窗独显"><svg><use href="#axis2"/></svg></button></div>
      <div class="bg g21"><button class="more" aria-label="捕捉"><svg><use href="#magnet"/></svg></button><button aria-label="捕捉设置"><svg><use href="#snapgear"/></svg></button></div>
      <div class="bg g11"><button aria-label="工作平面"><svg><use href="#grid"/></svg></button><button class="on more" aria-label="锁定工作平面"><svg><use href="#gridlock"/></svg></button></div>
      <div class="bg g11"><button aria-label="软选择"><svg><use href="#rings"/></svg></button><button aria-label="软选择设置"><svg><use href="#ringgear"/></svg></button></div>
      <div class="bg g11"><button aria-label="独显"><svg><use href="#hexring"/></svg></button><button class="more" aria-label="自动"><svg><use href="#hexa"/></svg></button><button aria-label="落地"><svg><use href="#drop"/></svg></button><button aria-label="对齐"><svg><use href="#axisarrow"/></svg></button><button class="wide" aria-label="脚本"><svg><use href="#snake"/></svg></button><button class="wide" aria-label="插件"><svg><use href="#play3"/></svg></button><button class="wide" aria-label="目标"><svg><use href="#target"/></svg></button></div>
      <div class="bg end"><button class="more" aria-label="渲染视图"><svg><use href="#clap"/></svg></button><button class="more" aria-label="渲染到图片"><svg><use href="#clapplay"/></svg></button><button class="more ym" aria-label="渲染设置"><svg><use href="#clapgear"/></svg></button></div>
      <div class="bg g11"><button aria-label="材质"><svg><use href="#ball"/></svg></button></div>
    </div>
    <div class="vpmenu">
      <svg class="ham"><use href="#menu"/></svg>
      <a href="#">查看</a><a href="#">摄像机</a><a href="#">显示</a><a href="#">选项</a><a href="#">过滤</a><a href="#">面板</a><a href="#" class="y">Redshift</a>
      <span class="mini"><svg class="i14"><use href="#hand"/></svg><svg class="i14"><use href="#updown"/></svg><svg class="i14"><use href="#orbit"/></svg><svg class="i14"><use href="#panes"/></svg></span>
    </div>
    <div class="viewport">
      <svg class="space" viewBox="0 0 1384 1118" preserveAspectRatio="none">
        <defs><linearGradient id="bgm" x2="0" y2="1"><stop offset="0" stop-color="#303030"/><stop offset="1" stop-color="#353535"/></linearGradient></defs>
        <rect width="1384" height="1118" fill="#262626"/><rect x="134" width="1116" height="1118" fill="url(#bgm)"/>
        <g stroke="#383838" fill="none">
          <path d="M0 395h1384M0 398h1384M0 402h1384M0 407h1384M0 412h1384M0 417h1384M0 425h1384M0 437h1384"/>
          <path d="M0 448l210 8M0 470l210 24M0 540l210-66M0 610l210-100M0 720l210-140M0 860l210-170M1280 452l104 10M1280 476l104 16M1280 520l104-12M1280 580l104 22M1280 656l104-26M1280 710l104 36"/>
        </g>
        <path d="M976 981l196 137" stroke="#555"/><path d="M879 914l97 67M945 976l32 5V965" stroke="#b54848" fill="none"/>
      </svg>
      <div class="hud tl">透视视图</div>
      <div class="stats"><span>Number of emitters: 5</span><span>Total live particles: 2410000</span></div>
      <div class="hud cam">默认摄像机<svg><use href="#stcam"/></svg></div>
      <div class="hud tool">移动<svg class="i16"><use href="#move"/></svg></div>
      <div class="hud br">网格间距 : 500 cm</div>
      <div class="gizmo"><b>Y</b><b>Z</b><b>X</b><svg viewBox="0 0 50 60"><path d="M15 24v18" stroke="#2bd46c"/><path d="M15 42l16-3" stroke="#2f6fd8" stroke-width="2"/><path d="M15 42l9 4" stroke="#e23c3c" stroke-width="2"/></svg></div>
    </div>
    <div class="hgrip"></div>
    <div class="transport">
      <div class="vgrip"></div>
      <div class="bg sm"><button aria-label="关键帧"><svg><use href="#kdiam"/></svg></button></div>
      <div class="bg sm tmid"><button aria-label="起点"><svg><use href="#t1"/></svg></button><button aria-label="上一关键帧"><svg><use href="#t2"/></svg></button><button aria-label="上一帧"><svg><use href="#t3"/></svg></button><button aria-label="播放"><svg><use href="#t4"/></svg></button><button aria-label="下一帧"><svg><use href="#t5"/></svg></button><button aria-label="下一关键帧"><svg><use href="#t6"/></svg></button><button aria-label="终点"><svg><use href="#t7"/></svg></button></div>
      <div class="bg sm g11"><button class="on more" aria-label="循环"><svg><use href="#loop"/></svg></button><button class="on more" aria-label="自动范围"><svg><use href="#abar"/></svg></button><button aria-label="声音"><svg><use href="#sound"/></svg></button></div>
      <input class="num g11" value="55 F" aria-label="当前帧">
      <div class="bg sm g11"><button class="more" aria-label="记录"><svg><use href="#rec"/></svg></button><button aria-label="自动关键帧"><svg><use href="#auto"/></svg></button><button aria-label="关键帧设置"><svg><use href="#kgear"/></svg></button></div>
      <div class="bg sm g11"><button aria-label="鼠标"><svg><use href="#mouse"/></svg></button><button aria-label="速率"><svg><use href="#dial"/></svg></button></div>
      <div class="bg sm g11"><button aria-label="位置"><svg><use href="#kmove"/></svg></button><button aria-label="旋转"><svg><use href="#krot"/></svg></button><button aria-label="缩放"><svg><use href="#kscale"/></svg></button><button aria-label="参数"><svg><use href="#kparam"/></svg></button><button class="on" aria-label="点级别"><svg><use href="#kpla"/></svg></button></div>
      <div class="bg sm end"><button aria-label="函数曲线"><svg><use href="#fcurve"/></svg></button></div>
    </div>
    <div class="ruler">
      <ol><li>0</li><li>10</li><li>20</li><li>30</li><li>40</li><li>50</li><li>60</li><li>70</li><li>80</li><li>90</li><li>100</li><li>110</li><li>120</li><li>130</li><li>140</li><li>150</li><li>160</li><li>170</li><li>180</li><li>190</li><li>200</li><li>210</li><li>220</li><li>230</li><li>240</li><li>250</li><li>260</li><li>270</li><li>280</li><li>290</li><li>300</li></ol>
      <div class="playhead" style="left:18.333%"><span>55</span></div>
    </div>
    <div class="range">
      <div class="vgrip"></div>
      <input class="num" value="0 F" aria-label="最小帧">
      <div class="rangebar"><span>0 F</span><span>300 F</span></div>
      <input class="num" value="300 F" aria-label="最大帧">
    </div>
  </section>

  <aside class="tools palette">
    <div class="grip"></div>
    <div class="bg v s1"><button aria-label="空白"><svg><use href="#nullo"/></svg></button></div>
    <div class="bg v s2"><button class="more" aria-label="样条"><svg><use href="#rect"/></svg></button><button class="more" aria-label="立方体"><svg><use href="#cube"/></svg></button><button class="more" aria-label="文本"><svg><use href="#text"/></svg></button></div>
    <div class="bg v s2"><button class="more ym" aria-label="细分"><svg><use href="#subdiv"/></svg></button><button class="more ym" aria-label="克隆"><svg><use href="#cloner"/></svg></button><button class="more ym" aria-label="效果器"><svg><use href="#field"/></svg></button></div>
    <div class="bg v s3"><button class="more" aria-label="弯曲"><svg><use href="#bean"/></svg></button><button class="more" aria-label="域"><svg><use href="#pcoords"/></svg></button></div>
    <div class="bg v s3"><button class="more" aria-label="对称"><svg><use href="#sym"/></svg></button></div>
    <div class="bg v s2 rs"><button aria-label="RS 材质"><svg><use href="#rs1"/></svg></button><button class="more ym" aria-label="RS 穹顶"><svg><use href="#rs2"/></svg></button><button class="more ym" aria-label="RS 相机"><svg><use href="#rs3"/></svg></button><button class="more ym" aria-label="RS 灯光"><svg><use href="#rs4"/></svg></button><button class="more ym" aria-label="RS 代理"><svg><use href="#rs5"/></svg></button><button class="more ym" aria-label="RS 天空"><svg><use href="#rs6"/></svg></button></div>
    <div class="bg v s0"><button class="more" aria-label="相机"><svg><use href="#stcam"/></svg></button></div>
    <div class="bg v s4"><button aria-label="编辑"><svg><use href="#edit"/></svg></button></div>
  </aside>

  <div class="side">
    <section class="panel objects">
      <div class="tabs"><button class="on">对象</button><button>场次</button></div>
      <div class="pmenu"><svg class="ham"><use href="#menu"/></svg><a href="#">文件</a><a href="#">编辑</a><a href="#">查看</a><a href="#">对象</a><a href="#">标签</a><a href="#">书签</a><span class="mini"><svg class="i14"><use href="#search"/></svg><svg class="i14"><use href="#home"/></svg><svg class="i14"><use href="#filter"/></svg><svg class="i14"><use href="#ext"/></svg></span></div>
      <ul class="objs">
        <li><span class="nm"><svg><use href="#cache"/></svg>xpCache</span><i class="sq"></i><i class="dd"></i><svg class="st"><use href="#check"/></svg><span class="tg"></span></li>
        <li><span class="nm"><svg><use href="#emit"/></svg>狼4</span><i class="sq"></i><i class="dd r"></i><svg class="st"><use href="#cross"/></svg><span class="tg"><svg class="c"><use href="#cache"/></svg></span></li>
        <li><span class="nm"><svg><use href="#emit"/></svg>鹿3</span><i class="sq"></i><i class="dd r"></i><svg class="st"><use href="#cross"/></svg><span class="tg"><svg class="c"><use href="#cache"/></svg></span></li>
        <li><span class="nm"><svg><use href="#emit"/></svg>马2</span><i class="sq"></i><i class="dd r"></i><svg class="st"><use href="#cross"/></svg><span class="tg"><svg class="c"><use href="#cache"/></svg></span></li>
        <li><span class="nm ex"><svg><use href="#age"/></svg>Particle Age225</span><i class="sq"></i><i class="dd"></i><svg class="st"><use href="#cross"/></svg><span class="tg"></span></li>
        <li><span class="nm ex"><svg><use href="#age"/></svg>Particle Age150</span><i class="sq"></i><i class="dd"></i><svg class="st"><use href="#cross"/></svg><span class="tg"></span></li>
        <li><span class="nm ex sel"><svg><use href="#age"/></svg>Particle Age75</span><i class="sq"></i><i class="dd"></i><svg class="st"><use href="#cross"/></svg><span class="tg"></span></li>
        <li><span class="nm"><svg><use href="#turb"/></svg>xpTurbulence</span><i class="sq"></i><i class="dd"></i><svg class="st"><use href="#cross"/></svg><span class="tg"></span></li>
        <li><span class="nm"><svg><use href="#attr"/></svg>xpAttractor</span><i class="sq"></i><i class="dd"></i><svg class="st"><use href="#cross"/></svg><span class="tg"></span></li>
        <li><span class="nm ex op"><svg><use href="#emit"/></svg>兔1</span><i class="sq"></i><i class="dd"></i><svg class="st"><use href="#check"/></svg><span class="tg"><svg class="c"><use href="#cache"/></svg></span></li>
        <li><span class="nm child green"><svg><use href="#group"/></svg>Particle Group 1</span><i class="sq"></i><i class="dd"></i><svg class="st"><use href="#check"/></svg><span class="tg"></span></li>
        <li><span class="nm ex op"><svg><use href="#emit"/></svg>兔1.飘散</span><i class="sq"></i><i class="dd"></i><svg class="st"><use href="#check"/></svg><span class="tg"><svg class="c"><use href="#cache"/></svg></span></li>
        <li><span class="nm child"><svg><use href="#group"/></svg>Particle Group 4</span><i class="sq"></i><i class="dd"></i><svg class="st"><use href="#check"/></svg><span class="tg"></span></li>
        <li><span class="nm"><svg><use href="#poly"/></svg>狼4</span><i class="sq"></i><i class="dd r"></i><i class="st"></i><span class="tg"><svg><use href="#weight"/></svg><svg><use href="#uvw"/></svg><svg><use href="#phong"/></svg></span></li>
        <li><span class="nm"><svg><use href="#poly"/></svg>鹿3</span><i class="sq"></i><i class="dd r"></i><i class="st"></i><span class="tg"><svg><use href="#weight"/></svg><svg><use href="#uvw"/></svg><svg><use href="#phong"/></svg></span></li>
        <li><span class="nm"><svg><use href="#poly"/></svg>马2</span><i class="sq"></i><i class="dd r"></i><i class="st"></i><span class="tg"><svg><use href="#weight"/></svg><svg><use href="#uvw"/></svg><svg><use href="#phong"/></svg></span></li>
        <li><span class="nm last"><svg><use href="#poly"/></svg>兔1</span><i class="sq"></i><i class="dd r"></i><i class="st"></i><span class="tg"><svg><use href="#weight"/></svg><svg><use href="#uvw"/></svg><svg><use href="#phong"/></svg></span></li>
        <li class="rest"></li>
      </ul>
    </section>

    <section class="panel attrs">
      <div class="tabs"><button class="on">属性</button><button>层</button></div>
      <div class="pmenu"><svg class="ham"><use href="#menu"/></svg><a href="#">模式</a><a href="#">编辑</a><a href="#">用户数据</a><span class="mini"><svg class="i14"><use href="#left"/></svg><svg class="i14 dim"><use href="#right"/></svg><svg class="i14 dim"><use href="#up"/></svg><svg class="i14"><use href="#search"/></svg><svg class="i14"><use href="#filter"/></svg><svg class="i14"><use href="#lock"/></svg><svg class="i14"><use href="#aim"/></svg><svg class="i14"><use href="#ext"/></svg></span></div>
      <div class="ahead"><svg><use href="#docgear"/></svg><span>工程</span><select aria-label="预设" class="dd-sel round"><option>自定义</option></select></div>
      <div class="atabs">
        <button class="on">工程</button><button>信息</button><button>Cineware</button><button><svg><use href="#bell"/></svg>XRefs</button><button><svg><use href="#bell"/></svg>动画</button><button><svg><use href="#bell"/></svg>子弹</button><button class="y"><svg><use href="#bell"/></svg>模拟</button><button><svg><use href="#bell"/></svg>待办事项</button><button><svg><use href="#bell"/></svg>节点</button><button><svg><use href="#bell"/></svg>X-Particles</button>
      </div>
      <div class="ascroll">
        <div class="abody">
          <h2>工程</h2>
          <div class="scalerow"><label for="sc">工程缩放</label><input id="sc" class="num" value="1"><select class="dd-sel unit" aria-label="单位"><option>厘米</option></select></div>
          <button class="pill scalebtn">缩放工程...</button>
          <section class="asec"><h3><svg><use href="#chev"/></svg>时间</h3>
            <div class="tgrid"><label for="a1">帧率</label><input id="a1" class="num" value="25"><label for="a2">工程时长</label><input id="a2" class="num" value="55 F"><label for="a3">最小时长</label><input id="a3" class="num" value="0 F"><label for="a4">最大时长</label><input id="a4" class="num" value="300 F"><label for="a5">预览最小</label><input id="a5" class="num" value="0 F"><label for="a6">预览最大</label><input id="a6" class="num" value="300 F"></div>
          </section>
          <section class="asec"><h3><svg><use href="#chev"/></svg>执行</h3>
            <div class="cgrid"><label for="e1">动画</label><input type="checkbox" id="e1" checked><label for="e2">表达式</label><input type="checkbox" id="e2" checked><label for="e3">生成器</label><input type="checkbox" id="e3" checked><label for="e4">变形器</label><input type="checkbox" id="e4" checked><label for="e5">运动剪辑系统</label><input type="checkbox" id="e5" checked></div>
          </section>
          <section class="asec"></section>
        </div>
        <div class="thumb"></div>
      </div>
      <div class="badge"><svg viewBox="0 0 50 50"><circle cx="25" cy="25" r="25" fill="#2f83e4"/><circle cx="25" cy="25" r="23" fill="#fff"/><circle cx="25" cy="25" r="21.500" fill="#fff" stroke="#111"/><path d="M21 21c-5-1-7-3-8-8M17 20l-1-7M29 21c5-1 7-3 8-8M33 20l1-7M15 18l-3-2M35 18l3-2" fill="none" stroke="#111" stroke-width="1.500"/><path d="M20 21l5 1 5-1-1 7-4 4-4-4z" fill="#000"/><path d="M16 37l4-1M18 36v6M15 41l5-2M22 38h4M24 36l-1 5 3 1M29 37h5M31 35v6M29 41h5" stroke="#111" stroke-width="1.400" fill="none"/></svg></div>
    </section>

    <section class="panel rv">
      <div class="rvtitle"><svg><use href="#x"/></svg><span>Redshift RenderView</span></div>
      <div class="rvham"><svg class="ham"><use href="#menu"/></svg></div>
      <nav class="rvmenu"><a href="#">File</a><a href="#">View</a><a href="#">Preferences</a></nav>
      <div class="rvbar">
        <button aria-label="渲染"><svg><use href="#clap"/></svg></button><button class="on" aria-label="开始"><svg><use href="#playc"/></svg></button><button aria-label="刷新"><svg><use href="#refresh"/></svg></button>
        <select class="rsel" aria-label="通道"><option>Beauty</option></select>
        <button class="rgb">RGB</button><i class="car"></i>
        <button aria-label="网点"><svg><use href="#dots"/></svg></button><button aria-label="裁剪"><svg><use href="#crop"/></svg></button>
        <select class="rsel" aria-label="渲染区域"><option>&lt; Render &gt;</option></select>
        <button class="on" aria-label="锁定"><svg><use href="#lock2"/></svg></button><button aria-label="网格"><svg><use href="#nine"/></svg></button><button aria-label="冻结"><svg><use href="#snow"/></svg></button><button class="sg" aria-label="冻结几何"><svg><use href="#snow"/></svg><b>G</b></button><button aria-label="圆"><svg><use href="#ring"/></svg></button><i class="car"></i>
        <button aria-label="居中"><svg><use href="#cdot"/></svg></button><button aria-label="适配"><svg><use href="#cimg"/></svg></button><button aria-label="斜线"><svg><use href="#chat"/></svg></button><button aria-label="快照"><svg><use href="#simg"/></svg></button><button aria-label="添加快照"><svg><use href="#splus"/></svg></button><button class="pv" aria-label="图片查看器"><svg><use href="#stack"/></svg><b>PV</b></button><button aria-label="复制"><svg><use href="#spage"/></svg></button>
        <div class="zoomv"><input value="115 %" aria-label="缩放"><svg><use href="#spin"/></svg></div><select class="rsel fit" aria-label="适应"><option>Fit Window</option></select><button class="last" aria-label="设置"><svg><use href="#gear"/></svg></button>
      </div>
      <div class="stage"><div class="frame"><p>微信公众号<s>: </s>野鹿志 <s> </s>微博<s>: </s>野鹿志 <s> </s>作者<s>: </s>马鹿野郎<s>  55:  2023-01-09  04:19:10  (3.09s)</s></p></div></div>
      <div class="rvfoot"><span>Progressive Rendering...</span><div class="bar"></div><span class="pc">26%</span></div>
    </section>
  </div>
</main>

<footer class="status"><svg class="ham"><use href="#menu"/></svg><svg class="i14"><use href="#okc"/></svg><span>xpAttractor 对象 [xpAttractor]</span></footer>

<div class="dialog" role="dialog" aria-label="渲染设置">
  <div class="dtitle"><svg class="i16"><use href="#logo"/></svg><span>渲染设置</span><div class="winbtns"><button aria-label="最小化"><svg class="i12"><use href="#min"/></svg></button><button aria-label="最大化"><svg class="i12"><use href="#max"/></svg></button><button aria-label="关闭"><svg class="i12"><use href="#close"/></svg></button></div></div>
  <div class="dham"><svg class="ham"><use href="#menu"/></svg></div>
  <div class="dbody">
    <div class="dleft">
      <div class="rrow"><label for="rend">渲染器</label><select id="rend" class="dd-sel"><option>Redshift</option></select></div>
      <div class="mrow"><span>模式</span><div class="seg"><button>Basic</button><button class="on">Advanced</button></div></div>
      <ul class="tree">
        <li><i></i><span>输出</span></li><li><input type="checkbox" checked aria-label="保存"><span>保存</span></li><li><i></i><span class="or">Redshift</span></li><li class="last"><input type="checkbox" aria-label="Magic Bullet Looks"><span>Magic Bullet Looks</span></li>
      </ul>
      <button class="pill">效果...</button>
      <div class="presets"><svg class="i12"><use href="#scene"/></svg><span>我的渲染设置</span></div>
      <button class="pill">渲染设置...</button>
    </div>
    <div class="dright">
      <div class="dscroll">
        <section class="dsec first"><h3><svg><use href="#chev"/></svg>TRACE DEPTHS</h3>
          <div class="g depths">
            <label for="d1">Reflection</label><input id="d1" class="num" value="4"><input type="range" aria-label="Reflection" min="0" max="64" value="4" style="--v:6%">
            <label for="d2">Refraction</label><input id="d2" class="num" value="6"><input type="range" aria-label="Refraction" min="0" max="64" value="6" style="--v:9%">
            <label for="d3">Combined</label><input id="d3" class="num" value="6"><input type="range" aria-label="Combined" min="0" max="64" value="6" style="--v:9%">
            <label for="d4">Transparency</label><input id="d4" class="num" value="16"><input type="range" aria-label="Transparency" min="0" max="256" value="16" style="--v:6%">
          </div></section>
        <section class="dsec"><h3><svg><use href="#chev"/></svg>HAIR</h3>
          <div class="g hair">
            <label for="h1">Min Pixel Width</label><input type="checkbox" id="h1"><span></span>
            <label for="h2" class="dis">Automatic Threshold</label><input type="checkbox" id="h2" checked disabled><span></span>
            <label for="h3" class="dis">Threshold</label><input id="h3" class="num" value="0.125" disabled><input type="range" aria-label="Threshold" disabled value="6" style="--v:6%">
            <label for="h4" class="dis">Trace Depth</label><input id="h4" class="num" value="3" disabled><input type="range" aria-label="Trace Depth" disabled value="19" style="--v:19%">
            <span>Tessellation</span><div class="seg three"><button class="on">None</button><button>4-Steps</button><button>8-Steps</button></div>
          </div></section>
        <section class="dsec"><h3><svg><use href="#chev"/></svg>COLOR MANAGEMENT</h3>
          <div class="g color">
            <label for="c1">OpenColorIO Configuration</label><div class="path"><input id="c1" class="num" value="$OCIO"><svg><use href="#folder"/></svg></div>
            <b>Rendering Color Space</b><button class="pill">scene-linear Rec.709-sRGB</button>
            <span>Display</span><button class="pill">sRGB</button>
            <b>View</b><button class="pill hot">Un-tone-mapped</button>
            <label for="c5">Compensate for View Transform</label><input type="checkbox" id="c5" checked>
            <label for="c6">OpenColorIO File Rules</label><input type="checkbox" id="c6">
          </div></section>
        <section class="dsec"><h3><svg><use href="#chev"/></svg>OPTIONS</h3>
          <div class="g opts">
            <label for="o1">Default Light</label><input type="checkbox" id="o1" checked><label for="o2">Camera Space Render</label><input type="checkbox" id="o2">
            <label for="o3">8-Bit Quantization and Dithering</label><input type="checkbox" id="o3"><label for="o4">Freeze Tessellation</label><input type="checkbox" id="o4">
            <label for="o5">Default Environment</label><div class="path env"><input id="o5" class="num" value=""><i class="car"></i><svg><use href="#dropper"/></svg></div>
          </div></section>
        <section class="dsec"><h3><i></i>OTHER OVERRIDES</h3></section>
      </div>
      <div class="thumb"></div>
    </div>
  </div>
</div>
</body>
</html>
```
FILE: styles.css
```css
* { box-sizing: border-box; }
html, body { height: 100%; }
body {
  margin: 0; display: flex; flex-direction: column; position: relative; overflow: hidden;
  font: 16px/22px "Noto Sans", "Noto Sans CJK SC", sans-serif;
  color: #a6a6a6; background: #2b2b2b;
}
button, input, select { font: inherit; color: inherit; border: 0; padding: 0; margin: 0; background: none; }
a { color: inherit; text-decoration: none; }
h2, h3, ul, ol, p { margin: 0; padding: 0; font: inherit; list-style: none; }
svg { display: block; flex: none; }
.sprite { position: absolute; width: 0; height: 0; }
.i12 { width: 12px; height: 12px; }
.i14 { width: 14px; height: 14px; }
.i16 { width: 16px; height: 16px; }
.ham { width: 15px; height: 11px; color: #8c8c8c; }
.y { color: #dfe08a; }
.w { color: #e6e6e6; }

/* window chrome */
.titlebar { height: 23px; flex: none; background: #fff; color: #8f8f8f; display: flex; align-items: center; padding-left: 3px; gap: 4px; font-size: 14px; }
.winbtns { margin-left: auto; display: flex; }
.winbtns button { width: 45px; display: grid; place-items: center; }
.titlebar .winbtns { padding-right: 4px; }
.docbar { height: 36px; flex: none; background: #1b1b1b; display: flex; align-items: center; padding-right: 14px; }
.undo { width: 36px; padding-left: 9px; color: #c4c4c4; }
.undo svg { width: 26px; height: 14px; }
.undo.off { color: #4c4c4c; }
.doctab { align-self: flex-end; height: 33px; display: flex; align-items: center; color: #5c5c5c; padding: 0 11px 2px; }
.doctab.on { width: 131px; margin-left: 8px; background: #2b2b2b; color: #d6d6d6; justify-content: space-between; }
.doctab:not(.on) { width: 144px; padding-left: 23px; }
.adddoc, .addlayout { color: #b8b8b8; }
.layouts { margin-left: auto; display: flex; gap: 61px; align-self: stretch; color: #6c6c6c; }
.layouts a { display: flex; align-items: center; border-bottom: 3px solid transparent; border-top: 2px solid transparent; }
.layouts a.on { color: #fff; border-bottom-color: #6468b4; padding: 0 9px; margin: 0 -9px; }
.addlayout { margin: 0 28px 0 54px; }
.newui { display: flex; align-items: center; gap: 25px; border-left: 2px solid #bdbdbd; height: 22px; padding-left: 21px; color: #d0d0d0; }
.toggle { appearance: none; width: 27px; height: 14px; border-radius: 7px; background: #b4b4b4; display: flex; align-items: center; padding-left: 2px; }
.toggle::before { content: ""; width: 9px; height: 10px; border-radius: 5px; background: #1b1b1b; }
.mainmenu { height: 36px; flex: none; display: flex; align-items: center; gap: 14px; padding: 0 0 2px 8px; }
.mainmenu .lat { padding-right: 2px; }

/* workspace */
.work { flex: 1; min-height: 0; display: grid; grid-template-columns: 38px minmax(0, 1386fr) 42px minmax(0, 1094fr); }
.bg { display: flex; background: #1f1f1f; border-radius: 4px; overflow: hidden; gap: 1px; border: solid #363636; border-width: 1px 0; }
.bg button { position: relative; flex: 1; display: grid; place-items: center; background: #3b3b3b; color: #b4b4b4; }
.bg svg { width: 24px; height: 24px; }
.toolbar .bg button { width: 35px; height: 34px; flex: none; }
.bg .wide svg { width: 32px; height: 32px; }
.bg .on { background: #54589a; }
.bg .more::after { content: ""; position: absolute; right: 1px; bottom: 1px; border: 3px solid transparent; border-right-color: #b4b4b4; border-bottom-color: #b4b4b4; }
.bg .ym::after { border-right-color: #dfe08a; border-bottom-color: #dfe08a; }
.bg.v { flex-direction: column; width: 36px; }
.bg.v button { flex: none; height: 35px; width: 36px; }
.bg.v svg { width: 26px; height: 26px; }
.bg.rs svg { width: 30px; height: 33px; }
.grip { height: 5px; width: 30px; margin: 1px 0 0 4px; background: radial-gradient(#666 1px, transparent 1px) 0 0 / 3px 3px; }
.vgrip { width: 5px; align-self: stretch; margin: 3px 2px 4px 0; background: radial-gradient(#4c4c4c 1px, transparent 1px) 0 0 / 3px 3px; }
.hgrip { height: 5px; margin: 2px 0 3px 4px; background: radial-gradient(#4c4c4c 1px, transparent 1px) 0 0 / 3px 3px; }
.palette { padding-left: 4px; }
.s1 { margin-top: 21px; }
.s2 { margin-top: 9px; }
.s3 { margin-top: 3px; }
.s0 { margin-top: 1px; }
.s4 { margin-top: 16px; }

.center { display: flex; flex-direction: column; min-width: 0; min-height: 0; }
.toolbar { height: 36px; flex: none; display: flex; }
.toolbar .bg { height: 36px; }
.g11 { margin-left: 11px; }
.g5 { margin-left: 5px; }
.g21 { margin-left: 21px; }
.gbig { margin-left: 126px; }
.end { margin-left: auto; }
.bg .ax { font-size: 20px; line-height: 20px; padding-bottom: 6px; }
.ax::before { content: ""; position: absolute; left: 8px; right: 8px; bottom: 6px; height: 2px; background: currentColor; }
.axx::before { background: #e05656; }
.axy::before { background: #63dc78; }
.axz::before { background: #2f86e2; }
.vpmenu { height: 30px; flex: none; margin-top: 1px; border-top: 1px solid #1f1f1f; display: flex; align-items: center; gap: 14px; padding: 0 3px 1px 5px; }
.vpmenu .ham, .pmenu .ham { margin-right: -4px; }
.mini { margin-left: auto; display: flex; gap: 6px; color: #8c8c8c; }
.attrs .mini { gap: 6px; }
.mini .dim { color: #4c4c4c; }
.viewport { position: relative; flex: 1; min-height: 0; border: 1px solid #666; overflow: hidden; }
.space { position: absolute; inset: 0; width: 100%; height: 100%; }
.hud { position: absolute; background: #232323; color: #e6e6e6; height: 23px; padding: 0 2px 1px; border-radius: 3px; display: flex; align-items: center; gap: 3px; }
.hud svg { width: 19px; height: 17px; }
.tl { left: 2px; top: 2px; }
.cam { left: 636px; top: 2px; padding-right: 4px; }
.tool { left: 2px; top: 361px; gap: 34px; background: #262626; }
.br { right: 3px; bottom: 3px; padding-right: 15px; }
.stats { position: absolute; left: 207px; top: 11px; display: flex; flex-direction: column; align-items: flex-start; color: #f4b90c; line-height: 29px; }
.stats span { background: #5a5a5a; padding: 0 5px 0 4px; }
.gizmo { position: absolute; right: 5px; top: 0; width: 50px; height: 60px; }
.gizmo svg { width: 50px; height: 60px; }
.gizmo b { position: absolute; font-weight: 500; line-height: 16px; left: 10px; top: 5px; color: #2bd46c; }
.gizmo b:nth-child(2) { left: 37px; top: 32px; color: #2f6fd8; }
.gizmo b:nth-child(3) { left: 29px; top: 41px; color: #e23c3c; }

/* timeline */
.transport { height: 28px; flex: none; display: flex; align-items: center; padding-right: 1px; }
.sm button { width: 27px; height: 26px; flex: none; }
.sm svg { width: 20px; height: 20px; }
.tmid { margin-left: 305px; }
.num { width: 102px; height: 25px; border-radius: 3px; background: #1b1b1b; color: #e4e4e4; text-align: center; min-width: 0; padding-bottom: 2px; }
.num:disabled { background: #252525; color: #6a6a6a; }
.ruler { height: 23px; flex: none; margin: 2px 4px 0 14px; position: relative;
  background: repeating-linear-gradient(90deg, #8c8c8c 0 1px, transparent 1px calc(100% / 12)) 0 0 / 100% 20px no-repeat,
    repeating-linear-gradient(90deg, #9c9c9c 0 1px, transparent 1px calc(100% / 30)) 0 20px / 100% 3px no-repeat,
    repeating-linear-gradient(90deg, #8c8c8c 0 1px, transparent 1px calc(100% / 300)) 0 20px / 100% 1px no-repeat; }
.ruler ol { display: flex; justify-content: space-between; line-height: 19px; }
.ruler li { width: 0; display: flex; justify-content: center; color: #9c9c9c; }
.playhead { position: absolute; top: 0; margin-left: -4px; height: 22px; width: 8px; background: #6d71bd; }
.playhead span { position: absolute; left: 8px; padding: 0 1px 0 3px; background: #2b2b2b; color: #6d71bd; line-height: 19px; }
.range { height: 26px; flex: none; margin: 2px 0; display: flex; align-items: center; }
.range .num:first-of-type { margin-left: 1px; }
.range .num:last-child { margin-right: -2px; }
.rangebar { flex: 1; margin: 0 7px 0 8px; height: 18px; background: #3c3c3c; border-radius: 3px; display: flex; justify-content: space-between; align-items: center; padding: 0 17px 2px 15px; color: #b4b4b4; }
.status { height: 25px; flex: none; background: #1b1b1b; display: flex; align-items: center; padding: 0 0 1px 4px; gap: 9px; color: #b0b0b0; border-top: 1px solid #202020; }
.status .i14 { margin-left: 2px; color: #a0a0a0; }

/* side panels */
.side { min-width: 0; min-height: 0; display: grid; grid-template-columns: 1fr 1fr; grid-template-rows: 488px minmax(0, 1fr); column-gap: 2px; row-gap: 2px; background: #1f1f1f; }
.panel { background: #2b2b2b; min-width: 0; min-height: 0; display: flex; flex-direction: column; }
.tabs { height: 30px; flex: none; background: #1b1b1b; display: flex; color: #5c5c5c; border-top: 1px solid #202020; }
.tabs button { padding: 0 15px 3px 14px; }
.tabs .on { background: #2b2b2b; color: #d6d6d6; }
.pmenu { height: 30px; flex: none; border-bottom: 1px solid #1f1f1f; display: flex; align-items: center; gap: 14px; padding: 0 4px 3px 5px; }
.objs { flex: 1; display: flex; flex-direction: column; padding-right: 3px; }
.objs li { height: 23px; flex: none; display: flex; align-items: center; background: #2a2a2a; padding-left: 7px; }
.objs li:nth-child(odd) { background: #212121; }
.objs li.rest { flex: 1; height: auto; background: linear-gradient(90deg, #2b2b2b 225px, #1f1f1f 225px 227px, #2b2b2b 227px); }
.nm { display: flex; align-items: center; gap: 4px; width: 173px; flex: none; align-self: stretch; border-left: 1px solid #555; position: relative; padding: 0 0 1px 8px; white-space: nowrap; }
.nm::before { content: ""; position: absolute; left: 0; top: 11px; width: 7px; height: 1px; background: #555; }
.nm svg { width: 16px; height: 17px; }
.nm.last { border-image: linear-gradient(#555 50%, transparent 50%) 1; }
.nm.ex::after { content: "+"; position: absolute; left: -5px; top: 7px; width: 9px; height: 9px; border: 1px solid #777; background: #262626; font-size: 10px; line-height: 6px; text-align: center; color: #999; }
.nm.op::after { content: "-"; }
.nm.sel { color: #fdcb2f; }
.nm.child { padding-left: 21px; }
.nm.child::before { left: 11px; width: 9px; height: 12px; top: 0; background: none; border-left: 1px solid #555; border-bottom: 1px solid #555; }
.nm.child svg { width: 14px; color: #ddd; }
.nm.green svg { color: #7ac92b; }
.sq { width: 12px; height: 12px; border-radius: 2px; background: #8a8a8a; }
.dd { width: 6px; height: 15px; margin: 0 6px 0 5px; background: radial-gradient(circle at 3px 3px, #5c5c5c 3px, transparent 3px) 0 0 / 6px 9px; }
.dd.r { background-image: radial-gradient(circle at 3px 3px, #e85a58 3px, transparent 3px); }
.st { width: 12px; height: 12px; }
.tg { flex: 1; align-self: stretch; display: flex; align-items: center; gap: 7px; margin-left: 3px; border-left: 2px solid #202020; padding: 0 0 4px 4px; background: #292929; }
.objs li:nth-child(odd) .tg { background: #242424; }
.tg svg { width: 13px; height: 14px; }
.tg .c { width: 17px; height: 17px; margin-left: -2px; }

.attrs { position: relative; }
.ahead { height: 33px; flex: none; display: flex; align-items: center; gap: 9px; padding: 0 8px 0 11px; }
.ahead svg { width: 13px; height: 17px; }
.dd-sel { appearance: none; height: 25px; border-radius: 4px; background: conic-gradient(from -45deg at 50% 100%, #c4c4c4 90deg, transparent 0) right 9px top 12px / 7px 4px no-repeat, #3b3b3b; background: linear-gradient(#c4c4c4, #c4c4c4) right 9px top 12px / 6px 1px no-repeat, linear-gradient(#c4c4c4, #c4c4c4) right 10px top 13px / 4px 1px no-repeat, linear-gradient(#c4c4c4, #c4c4c4) right 11px top 14px / 2px 1px no-repeat, #3b3b3b; padding: 0 0 2px 7px; line-height: 22px; color: #b4b4b4; }
.dd-sel.round { margin-left: auto; width: 113px; border-radius: 11px 5px 5px 11px; }
.atabs { display: flex; flex-wrap: wrap; gap: 4px; padding: 0 8px; flex: none; }
.atabs button { height: 28px; padding: 0 14px; border-radius: 4px; background: #3b3b3b; display: flex; align-items: center; gap: 6px; color: #b0b0b0; }
.atabs .on { background: #54589a; color: #fff; }
.atabs button.y { color: #dfe08a; }
.atabs svg { width: 15px; height: 16px; }
.ascroll { flex: 1; min-height: 0; display: flex; overflow: hidden; padding: 4px 12px 0 6px; gap: 6px; }
.abody { flex: 1; }
.abody h2 { height: 32px; line-height: 28px; padding-left: 2px; color: #fff; font-weight: 500; }
.scalerow { display: flex; align-items: center; height: 25px; padding-left: 24px; }
.scalerow .num { margin: 0 6px 0 5px; }
.unit { width: 65px; }
.pill { height: 25px; border-radius: 9px; background: #3b3b3b; color: #b8b8b8; display: block; text-align: center; line-height: 22px; padding-bottom: 2px; }
.scalebtn { margin: 3px 0 10px 13px; width: 98px; }
.asec { border-top: 1px solid #222; padding: 4px 0 11px; }
.asec h3, .dsec h3 { display: flex; align-items: center; font-weight: 700; height: 24px; color: #b8b8b8; }
.asec h3 { gap: 5px; padding-left: 11px; font-size: 15px; }
.asec h3 svg, .dsec h3 svg { width: 8px; height: 8px; }
.tgrid { display: grid; grid-template-columns: 69px 127px 69px 102px; row-gap: 4px; padding: 7px 0 0 32px; align-items: center; }
.cgrid { display: grid; grid-template-columns: 53px 52px 101px 52px 53px 12px; grid-auto-rows: 25px; row-gap: 2px; align-items: center; padding: 7px 0 0 32px; }
.thumb { width: 4px; border-radius: 2px; background: #4c4c4c; flex: none; }
.ascroll .thumb { height: 191px; }
.badge { position: absolute; left: 168px; top: 66px; width: 50px; height: 50px; }

input[type=checkbox]:not(.toggle) { appearance: none; width: 12px; height: 12px; border: 2px solid #777; border-radius: 2px; display: grid; place-items: center; flex: none; }
input[type=checkbox]:not(.toggle):checked { background: #565aa4; border-color: #565aa4; }
input[type=checkbox]:not(.toggle):checked::before { content: ""; width: 4px; height: 7px; margin-top: -3px; border: solid #fff; border-width: 0 2px 2px 0; transform: rotate(42deg); }
input[type=checkbox]:not(.toggle):checked:disabled { background: #3c3e66; border-color: #3c3e66; }
input[type=checkbox]:not(.toggle):checked:disabled::before { border-color: #888; }
input[type=range] { appearance: none; width: 100%; height: 4px; border-radius: 2px; background: linear-gradient(#565aa4, #565aa4) 0 0 / var(--v) 100% no-repeat, #1b1b1b; }
input[type=range]::-webkit-slider-thumb { appearance: none; width: 4px; height: 12px; border-radius: 2px; background: #b8b8b8; }
input[type=range]:disabled { background: linear-gradient(#33345a, #33345a) 0 0 / var(--v) 100% no-repeat, #242424; }
input[type=range]:disabled::-webkit-slider-thumb { background: transparent; }

/* render view */
.rv { grid-column: 1 / -1; }
.rvtitle { height: 17px; flex: none; background: #1f1f1f; color: #c4c4c4; display: flex; gap: 11px; padding-left: 4px; line-height: 24px; }
.rvtitle svg { width: 9px; height: 9px; margin-top: 4px; color: #999; }
.rvham { height: 33px; flex: none; border-bottom: 1px solid #1f1f1f; padding: 16px 0 0 5px; }
.rvmenu { height: 23px; flex: none; display: flex; align-items: center; gap: 12px; padding-left: 6px; font-size: 12px; color: #b4b4b4; }
.rvbar { height: 34px; flex: none; display: flex; align-items: center; gap: 3px; color: #8b8b8b; padding-bottom: 1px; }
.rvbar button { width: 31px; height: 31px; display: grid; place-items: center; position: relative; flex: none; }
.rvbar button svg { width: 24px; height: 24px; }
.rvbar .on { background: #54589a; }
.rvbar .last { width: 28px; }
.rsel { appearance: none; width: 97px; height: 19px; border: 1px solid #555; border-radius: 3px; background: conic-gradient(from -45deg at 50% 100%, #ddd 90deg, transparent 0) right 5px center / 9px 5px no-repeat, #6b6b6b; background: linear-gradient(#ddd, #ddd) right 4px top 6px / 8px 2px no-repeat, linear-gradient(#ddd, #ddd) right 5px top 8px / 6px 1px no-repeat, linear-gradient(#ddd, #ddd) right 6px top 9px / 4px 1px no-repeat, linear-gradient(#ddd, #ddd) right 7px top 10px / 2px 1px no-repeat, #6b6b6b; padding-left: 5px; color: #eee; font: 10px/17px "Liberation Mono", monospace; flex: none; }
.rvbar .rgb { width: 25px; height: 25px; margin: 0 3px 0 6px; border-radius: 50%; background: #8b8b8b; color: #2b2b2b; font-size: 9px; font-weight: 700; line-height: 20px; }
.car { width: 0; height: 0; border: 4px solid transparent; border-top: 6px solid #c4c4c4; border-bottom: 0; flex: none; }
.rvbar .car { margin: 0 3px 0 1px; }
.rvbar b { position: absolute; font-size: 10px; line-height: 10px; }
.rvbar .sg b { right: 2px; bottom: 3px; font-size: 12px; background: #2b2b2b; }
.rvbar .pv b { left: 10px; top: 8px; color: #2b2b2b; font-size: 11px; }
.zoomv { width: 60px; height: 19px; border: 1px solid #555; padding: 0 5px; border-radius: 3px; margin-left: auto; color: #ccc; display: flex; align-items: center; }
.zoomv input { flex: 1; min-width: 0; font: 10px/17px "Liberation Mono", monospace; }
.zoomv svg { width: 6px; height: 11px; }
.rvbar .fit { width: 103px; }
.stage { flex: 1; min-height: 0; background: #333; display: flex; justify-content: center; border-top: 1px solid #1f1f1f; padding-left: 30px; }
.frame { width: 72%; max-width: 750px; background: #000; display: flex; align-items: flex-end; justify-content: center; padding: 0 16px 18px 0; }
.frame p { color: #fff; font-size: 12px; line-height: 16px; white-space: pre; }
.frame s { text-decoration: none; font: 10px/16px "Liberation Mono", monospace; }
.rvfoot { height: 32px; flex: none; display: flex; align-items: center; justify-content: flex-end; font: 10px/12px "Liberation Mono", monospace; color: #b0b0b0; gap: 6px; padding: 2px 36px 0 0; }
.bar { width: 24px; height: 12px; background: #90aede; margin-left: 4px; }
.pc { color: #777; margin-left: 4px; }

/* render settings window */
.dialog { position: absolute; left: 245px; top: 330px; width: 1079px; height: 747px; background: #2b2b2b; display: flex; flex-direction: column; box-shadow: 0 3px 12px #0009; }
.dtitle { height: 30px; flex: none; background: #fff; color: #111; display: flex; align-items: center; padding-left: 8px; gap: 5px; font-size: 12px; }
.dtitle .winbtns { padding-right: 1px; }
.dham { height: 22px; flex: none; border-bottom: 1px solid #1f1f1f; padding: 5px 0 0 5px; }
.dham .ham { color: #fff; }
.dbody { flex: 1; min-height: 0; display: flex; }
.dleft { width: 340px; flex: none; display: flex; flex-direction: column; padding-right: 1px; border-right: 2px solid #222; }
.rrow { display: flex; align-items: center; gap: 5px; padding: 6px 0 0 28px; }
.rrow .dd-sel { width: 113px; }
.mrow { display: flex; align-items: flex-start; gap: 6px; padding: 13px 0 10px 61px; }
.mrow > span { padding-top: 8px; }
.seg { flex: 1; display: flex; gap: 1px; height: 25px; border-radius: 2px; overflow: hidden; }
.seg button { flex: 1; background: #3b3b3b; color: #b8b8b8; line-height: 22px; padding-bottom: 2px; }
.seg .on { background: #595959; color: #fff; }
.tree { flex: 1; background: #222; }
.tree li { display: flex; height: 26px; align-items: center; padding-left: 5px; }
.tree i { width: 12px; }
.tree li span { position: relative; margin-left: 16px; padding-left: 9px; line-height: 26px; border-left: 1px solid #4a4a4a; }
.tree li span::before { content: ""; position: absolute; left: 0; top: 13px; width: 8px; height: 1px; background: #4a4a4a; }
.tree li.last span { border-image: linear-gradient(#4a4a4a 50%, transparent 50%) 1; }
.tree .or, .presets span { color: #ff9c33; }
.dleft .pill { flex: none; margin: 4px 0; border-radius: 8px; }
.presets { height: 130px; flex: none; background: #222; display: flex; padding: 1px 0 0 3px; gap: 18px; color: #fff; }
.presets .i12 { margin-top: 6px; }
.dleft .pill:last-child { margin-bottom: 1px; }
.dright { flex: 1; display: flex; min-width: 0; gap: 6px; padding: 0 9px 0 7px; overflow: hidden; }
.dscroll { flex: 1; min-width: 0; }
.dright .thumb { height: 458px; margin-top: 125px; }
.dsec { border-top: 1px solid #222; padding: 4px 0 11px; }
.dsec.first { border: 0; padding-top: 0; }
.dsec h3 { height: 28px; gap: 5px; padding: 0 0 2px 11px; font-size: 15px; }
.dsec h3 i { width: 8px; }
.g { display: grid; padding: 4px 0 0 32px; align-items: center; grid-auto-rows: 25px; }
.g > label, .g > span, .g > b { padding-bottom: 1px; }
.depths { grid-template-columns: 107px 102px 1fr; row-gap: 4px; }
.hair { grid-template-columns: 166px 102px 1fr; row-gap: 3px; }
.depths input[type=range], .hair input[type=range] { margin-left: 4px; width: calc(100% - 4px); }
.hair .three { grid-column: 2 / -1; }
.dis { color: #666; }
.color { grid-template-columns: 253px 1fr; row-gap: 2px; grid-template-rows: 27px; }
.path { display: flex; align-items: center; gap: 5px; color: #999; }
.path .num { flex: 1; text-align: left; padding-left: 5px; }
.path svg { width: 14px; height: 12px; }
.hot { background: #595959; }
.opts { grid-template-columns: 256px 138px 174px 1fr; row-gap: 2px; }
.opts .env { grid-column: 2 / -1; }
.env svg { width: 16px; height: 16px; }
.env .car { border-width: 4px 3px 0; }
```
